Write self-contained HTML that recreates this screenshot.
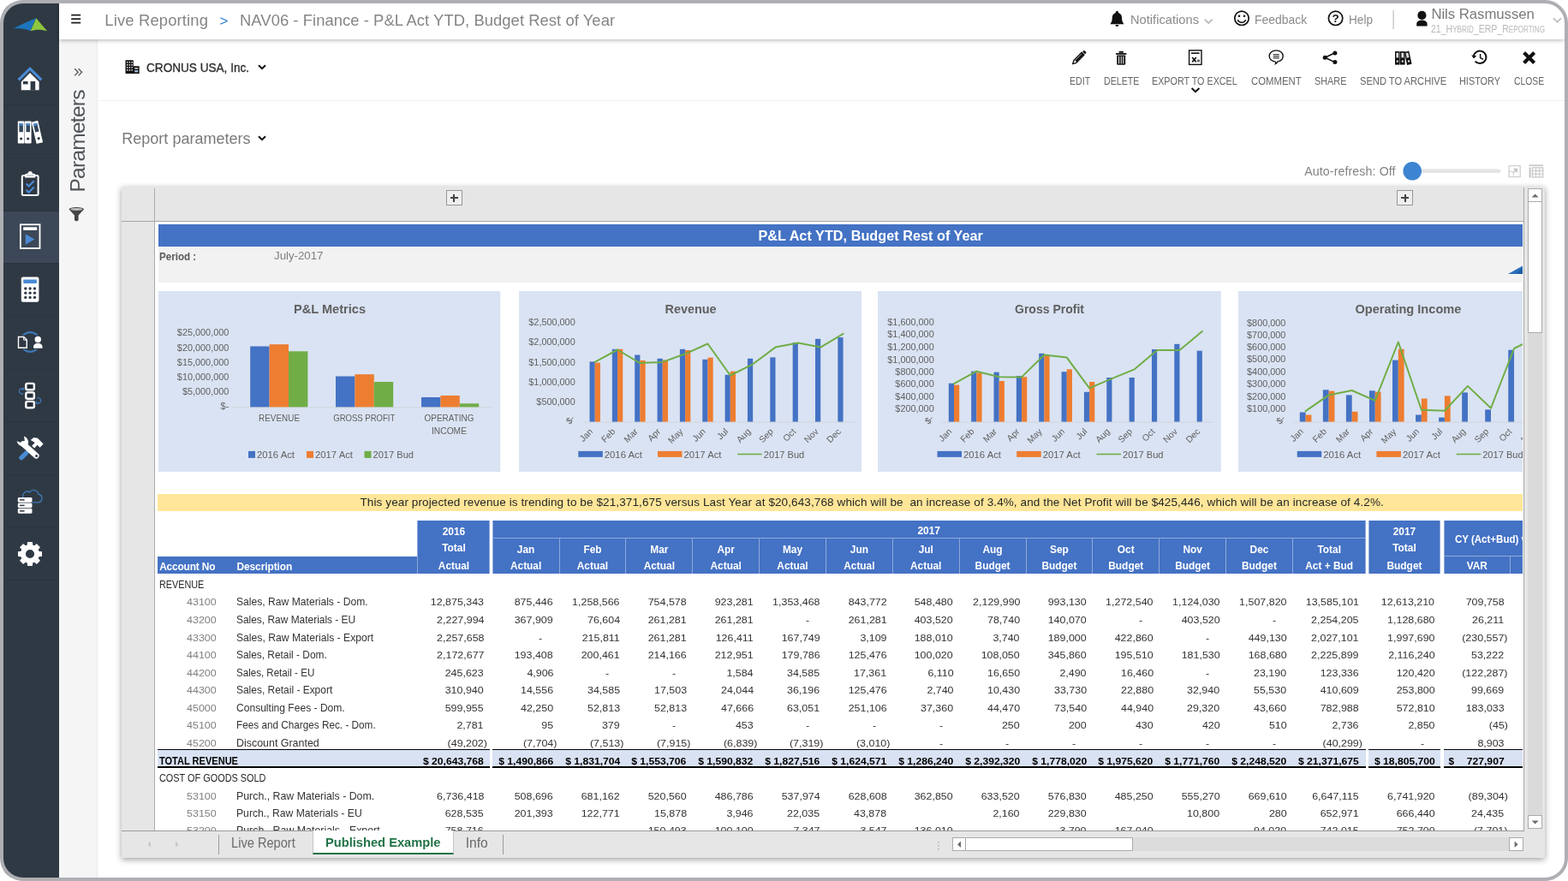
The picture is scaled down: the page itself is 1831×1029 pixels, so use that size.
<!DOCTYPE html>
<html lang="en"><head><meta charset="utf-8"><title>NAV06 - Finance - P&amp;L Act YTD, Budget Rest of Year</title>
<style>
*{box-sizing:border-box;margin:0;padding:0}
html,body{width:1831px;height:1029px;overflow:hidden;background:#fff}
body{font-family:"Liberation Sans",sans-serif;color:#333;position:relative}
.a{position:absolute;display:block}
.t{position:absolute;white-space:nowrap}
#app{position:absolute;left:0;top:0;width:1831px;height:1029px;overflow:hidden;background:#fff;will-change:transform}
#view{position:absolute;left:181px;top:259px;width:1597.4px;height:710.8px;background:#fff;overflow:hidden}
#bezel{position:absolute;left:0;top:0;width:1831px;height:1029px;border:4px solid #aeafb3;border-radius:27px;box-shadow:0 0 0 40px #fff;z-index:50;pointer-events:none}
</style></head>
<body>
<div id="app">
<div class="a" style="left:69px;top:46px;width:45px;height:979px;background:#f5f5f6;border-right:1px solid #e9e9e9;"></div>
<svg class="a" style="left:69px;top:46px;" width="46" height="260" viewBox="69 46 46 260"><path d="M87.2 80.2 l4 4.1 l-4 4.1 M91.6 80.2 l4 4.1 l-4 4.1" fill="none" stroke="#555" stroke-width="1.3"/><path d="M80.6 244.6 a8.7 2.7 0 0 1 17.4 0 l-6.4 7 v5.6 l-1.6 1 h-1.4 l-1.6 -1 v-5.6 Z" fill="#444"/><ellipse cx="89.3" cy="244.4" rx="7" ry="1.5" fill="#bdbdbd"/></svg>
<div class="t" style="left:90px;top:164px;width:0;height:0;"><div class="t" style="left:-60px;top:-14.5px;width:120px;font-size:24.6px;line-height:29px;color:#50555a;letter-spacing:-0.79px;transform:rotate(-90deg);transform-origin:50% 50%;">Parameters</div></div>
<div class="a" style="left:115px;top:117px;width:1712px;height:1px;background:#f0f0f0;"></div>
<svg class="a" style="left:115px;top:46px;" width="1712" height="170" viewBox="115 46 1712 170"><path d="M146.5 70.2 h9.2 v15.8 h-9.2 Z M155.7 77.2 h7 v8.8 h-7 Z" fill="#111"/><rect x="148" y="72" width="1.4" height="1.6" fill="#e8e8e8"/><rect x="150.7" y="72" width="1.4" height="1.6" fill="#e8e8e8"/><rect x="153.4" y="72" width="1.4" height="1.6" fill="#e8e8e8"/><rect x="148" y="75" width="1.4" height="1.6" fill="#e8e8e8"/><rect x="150.7" y="75" width="1.4" height="1.6" fill="#e8e8e8"/><rect x="153.4" y="75" width="1.4" height="1.6" fill="#e8e8e8"/><rect x="148" y="78" width="1.4" height="1.6" fill="#e8e8e8"/><rect x="150.7" y="78" width="1.4" height="1.6" fill="#e8e8e8"/><rect x="153.4" y="78" width="1.4" height="1.6" fill="#e8e8e8"/><rect x="148" y="81" width="1.4" height="1.6" fill="#e8e8e8"/><rect x="150.7" y="81" width="1.4" height="1.6" fill="#e8e8e8"/><rect x="153.4" y="81" width="1.4" height="1.6" fill="#e8e8e8"/><rect x="157.2" y="79.2" width="4" height="1.4" fill="#e8e8e8"/><rect x="157.2" y="82" width="4" height="2.4" fill="#9db7d6"/><path d="M302 76.2 l4 4 l4 -4" fill="none" stroke="#111" stroke-width="2"/><path d="M302 159.2 l4 4 l4 -4" fill="none" stroke="#111" stroke-width="2"/><g transform="translate(1260.2 67.2) scale(0.9) translate(-1260.4 -66.6)"><path d="M1252 74.9 l1.5 -4.7 l10.2 -10.2 l3.2 3.2 l-10.2 10.2 Z" fill="none" stroke="#111" stroke-width="1.5" stroke-linejoin="round"/><path d="M1255 70.5 l9.6 -9.6 l2 2 l-9.6 9.6 Z M1264.7 59 l1.2 -1.2 a1.2 1.2 0 0 1 1.7 0 l1.6 1.6 a1.2 1.2 0 0 1 0 1.7 l-1.2 1.2 Z" fill="#111"/></g><path d="M1303 62 h12.4 v1.8 h-12.4 Z M1306.6 59.8 h5.2 v2 h-5.2 Z" fill="#111"/><path d="M1304.2 64.6 h10 v10 a1.2 1.2 0 0 1 -1.2 1.2 h-7.6 a1.2 1.2 0 0 1 -1.2 -1.2 Z" fill="#111"/><rect x="1306.1" y="65.8" width="1" height="8.6" fill="#fff"/><rect x="1308.7" y="65.8" width="1" height="8.6" fill="#fff"/><rect x="1311.3" y="65.8" width="1" height="8.6" fill="#fff"/><rect x="1388.6" y="58.8" width="14.4" height="16.6" fill="none" stroke="#111" stroke-width="1.4"/><rect x="1391" y="61.3" width="9.6" height="1.6" fill="#111"/><path d="M1392.2 67 l4.6 5.4 M1396.8 67 l-4.6 5.4" stroke="#111" stroke-width="1.7" fill="none"/><rect x="1398" y="69.6" width="3" height="2.8" fill="#666"/><path d="M1490.2 58.9 c4.6 0 8 2.8 8 6.6 c0 3.2 -2.6 5.8 -6.2 6.4 c-0.4 1.4 -1.2 2.4 -2.6 2.8 c0.4 -0.8 0.4 -1.8 0 -2.6 c-4.2 -0.2 -7.2 -3 -7.2 -6.6 c0 -3.800 3.4 -6.6 8 -6.6 Z" fill="none" stroke="#111" stroke-width="1.4"/><rect x="1486.6" y="63.2" width="7.2" height="1" fill="#111"/><rect x="1486.6" y="65.3" width="7.2" height="1" fill="#111"/><rect x="1486.6" y="67.4" width="7.2" height="1" fill="#111"/><path d="M1547.2 67.2 L1558.8 61.8 M1547.2 67.2 L1558.8 72.6" stroke="#111" stroke-width="1.5" fill="none"/><circle cx="1547.2" cy="67.2" r="2.5" fill="#111"/><circle cx="1558.9" cy="61.9" r="2.5" fill="#111"/><circle cx="1558.9" cy="72.5" r="2.5" fill="#111"/><rect x="1629" y="60" width="5.6" height="15.6" fill="#111"/><rect x="1630.4" y="61.6" width="2.8" height="5.8" fill="#ddd"/><rect x="1630.8" y="70.6" width="2" height="2" fill="#fff"/><rect x="1635" y="60" width="5.6" height="15.6" fill="#111"/><rect x="1636.4" y="61.6" width="2.8" height="5.8" fill="#ddd"/><rect x="1636.8" y="70.6" width="2" height="2" fill="#fff"/><g transform="rotate(-12 1644 67.8)"><rect x="1641.4" y="60" width="5.6" height="15.6" fill="#111"/><rect x="1642.8" y="61.6" width="2.8" height="5.8" fill="#ddd"/><rect x="1643.2" y="70.6" width="2" height="2" fill="#fff"/></g><path d="M1722.6 71.6 a7.3 7.3 0 1 0 -1.8 -5.2" fill="none" stroke="#111" stroke-width="2"/><path d="M1718.2 64.6 l2.8 3.8 l3.2 -3.4 Z" fill="#111"/><path d="M1728.6 63 v4.6 l3.4 1.6" fill="none" stroke="#111" stroke-width="1.5"/><path d="M1779.6 61.4 L1791.6 73.4 M1791.6 61.4 L1779.6 73.4" stroke="#111" stroke-width="4.2" fill="none"/><path d="M1391.6 103 l4.4 4.2 l4.4 -4.2" fill="none" stroke="#111" stroke-width="2"/><rect x="1658" y="197.6" width="94.5" height="4.4" rx="2.2" fill="#e4e4e4"/><circle cx="1649.2" cy="199.8" r="10.8" fill="#3d85d2"/><rect x="1762.2" y="193.6" width="13" height="13" fill="none" stroke="#d0d0d0" stroke-width="1.3"/><path d="M1765 204 l6 -6 M1767.5 197.6 h3.8 v3.8" fill="none" stroke="#c4c4c4" stroke-width="1.6"/><rect x="1762.2" y="200.5" width="5" height="6" fill="#fff" stroke="#d0d0d0" stroke-width="1"/><rect x="1785.6" y="192.4" width="16.4" height="1.6" fill="#c6c6c6"/><rect x="1785.6" y="195.4" width="2" height="12" fill="#c6c6c6"/><rect x="1789.4" y="195.8" width="12.4" height="11.2" fill="none" stroke="#c6c6c6" stroke-width="1.2"/><path d="M1793.5 195.8 v11.2 M1797.6 195.8 v11.2 M1789.4 199.5 h12.4 M1789.4 203.2 h12.4" stroke="#c6c6c6" stroke-width="1" fill="none"/></svg>
<div class="t" style="left:171.2px;top:71px;font-size:14.6px;line-height:16px;color:#2e2e2e;transform:scaleX(0.9311);transform-origin:0 50%;-webkit-text-stroke:0.35px #2e2e2e;">CRONUS USA, Inc.</div>
<div class="t" style="left:142.3px;top:152px;font-size:18px;line-height:20px;color:#7a7a7a;letter-spacing:0.01px;">Report parameters</div>
<div class="t" style="left:1523.2px;top:192px;font-size:14.2px;line-height:16px;color:#838383;letter-spacing:0.11px;">Auto-refresh: Off</div>
<div class="t" style="left:1248.6px;top:88px;font-size:12.3px;line-height:14px;color:#666;transform:scaleX(0.8637);transform-origin:0 50%;">EDIT</div>
<div class="t" style="left:1288.8px;top:88px;font-size:12.3px;line-height:14px;color:#666;transform:scaleX(0.8652);transform-origin:0 50%;">DELETE</div>
<div class="t" style="left:1345.4px;top:88px;font-size:12.3px;line-height:14px;color:#666;transform:scaleX(0.8759);transform-origin:0 50%;">EXPORT TO EXCEL</div>
<div class="t" style="left:1461px;top:88px;font-size:12.3px;line-height:14px;color:#666;transform:scaleX(0.9253);transform-origin:0 50%;">COMMENT</div>
<div class="t" style="left:1535.4px;top:88px;font-size:12.3px;line-height:14px;color:#666;transform:scaleX(0.8825);transform-origin:0 50%;">SHARE</div>
<div class="t" style="left:1587.8px;top:88px;font-size:12.3px;line-height:14px;color:#666;transform:scaleX(0.9064);transform-origin:0 50%;">SEND TO ARCHIVE</div>
<div class="t" style="left:1704px;top:88px;font-size:12.3px;line-height:14px;color:#666;transform:scaleX(0.8851);transform-origin:0 50%;">HISTORY</div>
<div class="t" style="left:1767.8px;top:88px;font-size:12.3px;line-height:14px;color:#666;transform:scaleX(0.8441);transform-origin:0 50%;">CLOSE</div>
<div class="a" style="left:141.5px;top:218.3px;width:1662.8px;height:784px;background:#e6e6e6;box-shadow:0 2px 7px rgba(0,0,0,.38);"></div>
<div class="a" style="left:180px;top:219.5px;width:1px;height:750.5px;background:#ababab;"></div>
<div class="a" style="left:141.5px;top:258px;width:1638px;height:1px;background:#a6a6a6;"></div>
<div class="a" style="left:1778.4px;top:259px;width:1px;height:711px;background:#fff;"></div>
<div class="a" style="left:1779.4px;top:219px;width:1.1px;height:751px;background:#a8a8a8;"></div>
<div class="a" style="left:141.5px;top:969.8px;width:1638.5px;height:1px;background:#9b9b9b;"></div>
<div class="a" style="left:521px;top:222.2px;width:18.7px;height:18.2px;background:#efefef;border:1px solid #979797;"></div>
<div class="a" style="left:525.7px;top:230.3px;width:9.2px;height:2px;background:#454545;"></div>
<div class="a" style="left:529.3px;top:226.7px;width:2px;height:9.2px;background:#454545;"></div>
<div class="a" style="left:1631.2px;top:222.2px;width:18.7px;height:18.2px;background:#efefef;border:1px solid #979797;"></div>
<div class="a" style="left:1635.9px;top:230.3px;width:9.2px;height:2px;background:#454545;"></div>
<div class="a" style="left:1639.5px;top:226.7px;width:2px;height:9.2px;background:#454545;"></div>
<div class="a" style="left:1784.3px;top:220px;width:16.4px;height:748.3px;background:#dadada;"></div>
<div class="a" style="left:1784.3px;top:220.2px;width:16.4px;height:16.2px;background:#fff;border:1px solid #ababab;"></div>
<div class="a" style="left:1784.3px;top:236.4px;width:16.4px;height:152.4px;background:#fff;border:1px solid #ababab;border-top:0;"></div>
<div class="a" style="left:1784.3px;top:952.4px;width:16.4px;height:15.9px;background:#fff;border:1px solid #ababab;"></div>
<div class="a" style="left:1112px;top:978.4px;width:666.6px;height:15.6px;background:#dcdcdc;"></div>
<div class="a" style="left:1112px;top:978.4px;width:16px;height:15.6px;background:#fff;border:1px solid #ababab;"></div>
<div class="a" style="left:1128px;top:978.4px;width:195.2px;height:15.6px;background:#fff;border:1px solid #ababab;border-left:0;"></div>
<div class="a" style="left:1762.2px;top:978.4px;width:16.4px;height:15.6px;background:#fff;border:1px solid #ababab;"></div>
<svg class="a" style="left:141px;top:218px;" width="1665" height="785" viewBox="141 218 1665 785"><path d="M1788.6 230.6 l4 -4 l4 4 Z" fill="#6c6c6c"/><path d="M1788.6 958.4 l4 4 l4 -4 Z" fill="#6c6c6c"/><path d="M1122 982.4 l-4 3.8 l4 3.8 Z" fill="#6c6c6c"/><path d="M1768.6 982.4 l4 3.800 l-4 3.800 Z" fill="#6c6c6c"/><rect x="1095" y="983" width="1.4" height="1.4" fill="#aaa"/><rect x="1095" y="987" width="1.4" height="1.4" fill="#aaa"/><rect x="1095" y="991" width="1.4" height="1.4" fill="#aaa"/><path d="M176 982.6 l-3.600 3.600 l3.600 3.600 Z" fill="#c9c9c9"/><path d="M205 982.6 l3.600 3.600 l-3.600 3.600 Z" fill="#c9c9c9"/></svg>
<div class="a" style="left:255.2px;top:975.2px;width:1px;height:22.4px;background:#9d9d9d;"></div>
<div class="a" style="left:587.4px;top:975.2px;width:1px;height:22.4px;background:#9d9d9d;"></div>
<div class="a" style="left:365.4px;top:970px;width:164.2px;height:28px;background:#fff;border-bottom:2px solid #217346;border-left:1px solid #c6c6c6;border-right:1px solid #c6c6c6;"></div>
<div class="t" style="left:270.2px;top:976px;font-size:15.6px;line-height:17px;color:#6a6a6a;transform:scaleX(0.9376);transform-origin:0 50%;">Live Report</div>
<div class="t" style="left:380.4px;top:975px;font-size:15.2px;line-height:17px;color:#217346;font-weight:700;transform:scaleX(0.9657);transform-origin:0 50%;">Published Example</div>
<div class="t" style="left:543.8px;top:976px;font-size:15.6px;line-height:17px;color:#6a6a6a;letter-spacing:-0.07px;">Info</div>
<div id="view">
<div class="a" style="left:3.5px;top:2.5px;width:1594.5px;height:26px;background:#4472c4;"></div>
<div class="t" style="left:704.5px;top:7px;font-size:16.2px;line-height:18px;color:#fff;font-weight:700;letter-spacing:0.04px;">P&amp;L Act YTD, Budget Rest of Year</div>
<div class="a" style="left:3.5px;top:28.5px;width:1594.5px;height:42.2px;background:#f2f2f2;"></div>
<div class="t" style="left:5.3px;top:34px;font-size:12px;line-height:14px;color:#595959;font-weight:700;transform:scaleX(0.9670);transform-origin:0 50%;">Period :</div>
<div class="t" style="left:139px;top:33px;font-size:12.6px;line-height:14px;color:#7f7f7f;transform:scaleX(1.0524);transform-origin:0 50%;">July-2017</div>
<svg class="a" style="left:1578px;top:47px;" width="22" height="16" viewBox="0 0 22 16"><path d="M2 14 L20 4 L20 14 Z" fill="#2a6ebb"/><path d="M12 13.5 L20 6 L20 14 Z" fill="#1d5aa0"/></svg>
<div class="a" style="left:3px;top:318px;width:1595px;height:20px;background:#ffe699;"></div>
<div class="t" style="left:239.5px;top:320px;font-size:13.5px;line-height:15px;color:#262626;letter-spacing:0.11px;white-space:pre;">This year projected revenue is trending to be $21,371,675 versus Last Year at $20,643,768 which will be  an increase of 3.4%, and the Net Profit will be $425,446, which will be an increase of 4.2%.</div>
<div class="a" style="left:2.7px;top:390.7px;width:303.3px;height:20.6px;background:#4472c4;"></div>
<div class="t" style="left:5.2px;top:396px;font-size:11.9px;line-height:14px;color:#fff;font-weight:700;letter-spacing:-0.16px;">Account No</div>
<div class="t" style="left:95.5px;top:396px;font-size:11.9px;line-height:14px;color:#fff;font-weight:700;letter-spacing:-0.07px;">Description</div>
<div class="a" style="left:306px;top:349.2px;width:85.2px;height:62.1px;background:#4472c4;border-left:1px solid #8ea9db;border-right:1px solid #8ea9db;"></div>
<div class="t" style="left:335.76px;top:355px;font-size:11.9px;line-height:14px;color:#fff;font-weight:700;">2016</div>
<div class="t" style="left:335.23px;top:374px;font-size:11.9px;line-height:14px;color:#fff;font-weight:700;">Total</div>
<div class="t" style="left:330.82px;top:395px;font-size:11.9px;line-height:14px;color:#fff;font-weight:700;">Actual</div>
<div class="a" style="left:394.2px;top:349.2px;width:1019.8px;height:62.1px;background:#4472c4;border-left:1px solid #8ea9db;border-right:1px solid #8ea9db;"></div>
<div class="a" style="left:394.2px;top:369px;width:1019.8px;height:1px;background:#8ea9db;"></div>
<div class="t" style="left:890.46px;top:354px;font-size:11.9px;line-height:14px;color:#fff;font-weight:700;">2017</div>
<div class="t" style="left:422.87px;top:376px;font-size:11.9px;line-height:14px;color:#fff;font-weight:700;">Jan</div>
<div class="t" style="left:414.94px;top:395px;font-size:11.9px;line-height:14px;color:#fff;font-weight:700;">Actual</div>
<div class="a" style="left:471.55px;top:370px;width:1px;height:41.3px;background:#8ea9db;"></div>
<div class="t" style="left:500.4px;top:376px;font-size:11.9px;line-height:14px;color:#fff;font-weight:700;">Feb</div>
<div class="t" style="left:492.79px;top:395px;font-size:11.9px;line-height:14px;color:#fff;font-weight:700;">Actual</div>
<div class="a" style="left:549.4px;top:370px;width:1px;height:41.3px;background:#8ea9db;"></div>
<div class="t" style="left:578.24px;top:376px;font-size:11.9px;line-height:14px;color:#fff;font-weight:700;">Mar</div>
<div class="t" style="left:570.64px;top:395px;font-size:11.9px;line-height:14px;color:#fff;font-weight:700;">Actual</div>
<div class="a" style="left:627.25px;top:370px;width:1px;height:41.3px;background:#8ea9db;"></div>
<div class="t" style="left:656.43px;top:376px;font-size:11.9px;line-height:14px;color:#fff;font-weight:700;">Apr</div>
<div class="t" style="left:648.49px;top:395px;font-size:11.9px;line-height:14px;color:#fff;font-weight:700;">Actual</div>
<div class="a" style="left:705.1px;top:370px;width:1px;height:41.3px;background:#8ea9db;"></div>
<div class="t" style="left:732.95px;top:376px;font-size:11.9px;line-height:14px;color:#fff;font-weight:700;">May</div>
<div class="t" style="left:726.34px;top:395px;font-size:11.9px;line-height:14px;color:#fff;font-weight:700;">Actual</div>
<div class="a" style="left:782.95px;top:370px;width:1px;height:41.3px;background:#8ea9db;"></div>
<div class="t" style="left:811.8px;top:376px;font-size:11.9px;line-height:14px;color:#fff;font-weight:700;">Jun</div>
<div class="t" style="left:804.19px;top:395px;font-size:11.9px;line-height:14px;color:#fff;font-weight:700;">Actual</div>
<div class="a" style="left:860.8px;top:370px;width:1px;height:41.3px;background:#8ea9db;"></div>
<div class="t" style="left:891.63px;top:376px;font-size:11.9px;line-height:14px;color:#fff;font-weight:700;">Jul</div>
<div class="t" style="left:882.04px;top:395px;font-size:11.9px;line-height:14px;color:#fff;font-weight:700;">Actual</div>
<div class="a" style="left:938.65px;top:370px;width:1px;height:41.3px;background:#8ea9db;"></div>
<div class="t" style="left:966.51px;top:376px;font-size:11.9px;line-height:14px;color:#fff;font-weight:700;">Aug</div>
<div class="t" style="left:957.58px;top:395px;font-size:11.9px;line-height:14px;color:#fff;font-weight:700;">Budget</div>
<div class="a" style="left:1016.5px;top:370px;width:1px;height:41.3px;background:#8ea9db;"></div>
<div class="t" style="left:1045.01px;top:376px;font-size:11.9px;line-height:14px;color:#fff;font-weight:700;">Sep</div>
<div class="t" style="left:1035.43px;top:395px;font-size:11.9px;line-height:14px;color:#fff;font-weight:700;">Budget</div>
<div class="a" style="left:1094.35px;top:370px;width:1px;height:41.3px;background:#8ea9db;"></div>
<div class="t" style="left:1123.86px;top:376px;font-size:11.9px;line-height:14px;color:#fff;font-weight:700;">Oct</div>
<div class="t" style="left:1113.28px;top:395px;font-size:11.9px;line-height:14px;color:#fff;font-weight:700;">Budget</div>
<div class="a" style="left:1172.2px;top:370px;width:1px;height:41.3px;background:#8ea9db;"></div>
<div class="t" style="left:1200.38px;top:376px;font-size:11.9px;line-height:14px;color:#fff;font-weight:700;">Nov</div>
<div class="t" style="left:1191.13px;top:395px;font-size:11.9px;line-height:14px;color:#fff;font-weight:700;">Budget</div>
<div class="a" style="left:1250.05px;top:370px;width:1px;height:41.3px;background:#8ea9db;"></div>
<div class="t" style="left:1278.56px;top:376px;font-size:11.9px;line-height:14px;color:#fff;font-weight:700;">Dec</div>
<div class="t" style="left:1268.98px;top:395px;font-size:11.9px;line-height:14px;color:#fff;font-weight:700;">Budget</div>
<div class="a" style="left:1327.9px;top:370px;width:1px;height:41.3px;background:#8ea9db;"></div>
<div class="t" style="left:1357.43px;top:376px;font-size:11.9px;line-height:14px;color:#fff;font-weight:700;">Total</div>
<div class="t" style="left:1343.27px;top:395px;font-size:11.9px;line-height:14px;color:#fff;font-weight:700;">Act + Bud</div>
<div class="a" style="left:1417px;top:349.2px;width:84.3px;height:62.1px;background:#4472c4;border-left:1px solid #8ea9db;border-right:1px solid #8ea9db;"></div>
<div class="t" style="left:1445.76px;top:355px;font-size:11.9px;line-height:14px;color:#fff;font-weight:700;">2017</div>
<div class="t" style="left:1445.23px;top:374px;font-size:11.9px;line-height:14px;color:#fff;font-weight:700;">Total</div>
<div class="t" style="left:1438.51px;top:395px;font-size:11.9px;line-height:14px;color:#fff;font-weight:700;">Budget</div>
<div class="a" style="left:1505px;top:349.2px;width:114px;height:62.1px;background:#4472c4;border-left:1px solid #8ea9db;"></div>
<div class="a" style="left:1505px;top:390px;width:114px;height:1px;background:#8ea9db;"></div>
<div class="a" style="left:1582.3px;top:391px;width:1px;height:20.3px;background:#8ea9db;"></div>
<div class="t" style="left:1517.5px;top:364px;font-size:11.9px;line-height:14px;color:#fff;font-weight:700;transform:scaleX(0.9680);transform-origin:0 50%;">CY (Act+Bud) vs. Budget</div>
<div class="t" style="left:1531.68px;top:395px;font-size:11.9px;line-height:14px;color:#fff;font-weight:700;">VAR</div>
<div class="t" style="left:1599.94px;top:395px;font-size:11.9px;line-height:14px;color:#fff;font-weight:700;">VAR %</div>
<div class="t" style="left:5px;top:417px;font-size:12.3px;line-height:14px;color:#262626;transform:scaleX(0.8795);transform-origin:0 50%;">REVENUE</div>
<div class="t" style="left:36.6px;top:437px;font-size:11.8px;line-height:14px;color:#808080;transform:scaleX(1.0575);transform-origin:0 50%;">43100</div>
<div class="t" style="left:95.2px;top:437px;font-size:11.9px;line-height:14px;color:#333;transform:scaleX(1.0201);transform-origin:0 50%;">Sales, Raw Materials - Dom.</div>
<div class="t" style="left:324.94px;top:437px;font-size:11.8px;line-height:14px;color:#333;transform:scaleX(1.0550);transform-origin:100% 50%;">12,875,343</div>
<div class="t" style="left:422.39px;top:437px;font-size:11.8px;line-height:14px;color:#333;transform:scaleX(1.0550);transform-origin:100% 50%;">875,446</div>
<div class="t" style="left:490.4px;top:437px;font-size:11.8px;line-height:14px;color:#333;transform:scaleX(1.0550);transform-origin:100% 50%;">1,258,566</div>
<div class="t" style="left:578.09px;top:437px;font-size:11.8px;line-height:14px;color:#333;transform:scaleX(1.0550);transform-origin:100% 50%;">754,578</div>
<div class="t" style="left:655.94px;top:437px;font-size:11.8px;line-height:14px;color:#333;transform:scaleX(1.0550);transform-origin:100% 50%;">923,281</div>
<div class="t" style="left:723.95px;top:437px;font-size:11.8px;line-height:14px;color:#333;transform:scaleX(1.0550);transform-origin:100% 50%;">1,353,468</div>
<div class="t" style="left:811.64px;top:437px;font-size:11.8px;line-height:14px;color:#333;transform:scaleX(1.0550);transform-origin:100% 50%;">843,772</div>
<div class="t" style="left:889.49px;top:437px;font-size:11.8px;line-height:14px;color:#333;transform:scaleX(1.0550);transform-origin:100% 50%;">548,480</div>
<div class="t" style="left:957.5px;top:437px;font-size:11.8px;line-height:14px;color:#333;transform:scaleX(1.0550);transform-origin:100% 50%;">2,129,990</div>
<div class="t" style="left:1045.19px;top:437px;font-size:11.8px;line-height:14px;color:#333;transform:scaleX(1.0550);transform-origin:100% 50%;">993,130</div>
<div class="t" style="left:1113.2px;top:437px;font-size:11.8px;line-height:14px;color:#333;transform:scaleX(1.0550);transform-origin:100% 50%;">1,272,540</div>
<div class="t" style="left:1191.05px;top:437px;font-size:11.8px;line-height:14px;color:#333;transform:scaleX(1.0550);transform-origin:100% 50%;">1,124,030</div>
<div class="t" style="left:1268.9px;top:437px;font-size:11.8px;line-height:14px;color:#333;transform:scaleX(1.0550);transform-origin:100% 50%;">1,507,820</div>
<div class="t" style="left:1346.54px;top:437px;font-size:11.8px;line-height:14px;color:#333;transform:scaleX(1.0550);transform-origin:100% 50%;">13,585,101</div>
<div class="t" style="left:1435.44px;top:437px;font-size:11.8px;line-height:14px;color:#333;transform:scaleX(1.0550);transform-origin:100% 50%;">12,613,210</div>
<div class="t" style="left:1532.54px;top:437px;font-size:11.8px;line-height:14px;color:#333;transform:scaleX(1.0550);transform-origin:100% 50%;">709,758</div>
<div class="t" style="left:36.6px;top:458px;font-size:11.8px;line-height:14px;color:#808080;transform:scaleX(1.0575);transform-origin:0 50%;">43200</div>
<div class="t" style="left:95.2px;top:458px;font-size:11.9px;line-height:14px;color:#333;transform:scaleX(1.0031);transform-origin:0 50%;">Sales, Raw Materials - EU</div>
<div class="t" style="left:331.5px;top:458px;font-size:11.8px;line-height:14px;color:#333;transform:scaleX(1.0550);transform-origin:100% 50%;">2,227,994</div>
<div class="t" style="left:422.39px;top:458px;font-size:11.8px;line-height:14px;color:#333;transform:scaleX(1.0550);transform-origin:100% 50%;">367,909</div>
<div class="t" style="left:506.81px;top:458px;font-size:11.8px;line-height:14px;color:#333;transform:scaleX(1.0550);transform-origin:100% 50%;">76,604</div>
<div class="t" style="left:578.09px;top:458px;font-size:11.8px;line-height:14px;color:#333;transform:scaleX(1.0550);transform-origin:100% 50%;">261,281</div>
<div class="t" style="left:655.94px;top:458px;font-size:11.8px;line-height:14px;color:#333;transform:scaleX(1.0550);transform-origin:100% 50%;">261,281</div>
<div class="t" style="left:759.89px;top:458px;font-size:11.8px;line-height:14px;color:#333;transform:scaleX(1.0550);transform-origin:50% 50%;">-</div>
<div class="t" style="left:811.64px;top:458px;font-size:11.8px;line-height:14px;color:#333;transform:scaleX(1.0550);transform-origin:100% 50%;">261,281</div>
<div class="t" style="left:889.49px;top:458px;font-size:11.8px;line-height:14px;color:#333;transform:scaleX(1.0550);transform-origin:100% 50%;">403,520</div>
<div class="t" style="left:973.91px;top:458px;font-size:11.8px;line-height:14px;color:#333;transform:scaleX(1.0550);transform-origin:100% 50%;">78,740</div>
<div class="t" style="left:1045.19px;top:458px;font-size:11.8px;line-height:14px;color:#333;transform:scaleX(1.0550);transform-origin:100% 50%;">140,070</div>
<div class="t" style="left:1149.14px;top:458px;font-size:11.8px;line-height:14px;color:#333;transform:scaleX(1.0550);transform-origin:50% 50%;">-</div>
<div class="t" style="left:1200.89px;top:458px;font-size:11.8px;line-height:14px;color:#333;transform:scaleX(1.0550);transform-origin:100% 50%;">403,520</div>
<div class="t" style="left:1304.84px;top:458px;font-size:11.8px;line-height:14px;color:#333;transform:scaleX(1.0550);transform-origin:50% 50%;">-</div>
<div class="t" style="left:1353.1px;top:458px;font-size:11.8px;line-height:14px;color:#333;transform:scaleX(1.0550);transform-origin:100% 50%;">2,254,205</div>
<div class="t" style="left:1442px;top:458px;font-size:11.8px;line-height:14px;color:#333;transform:scaleX(1.0550);transform-origin:100% 50%;">1,128,680</div>
<div class="t" style="left:1539.98px;top:458px;font-size:11.8px;line-height:14px;color:#333;transform:scaleX(1.0550);transform-origin:100% 50%;">26,211</div>
<div class="t" style="left:36.6px;top:479px;font-size:11.8px;line-height:14px;color:#808080;transform:scaleX(1.0575);transform-origin:0 50%;">43300</div>
<div class="t" style="left:95.2px;top:479px;font-size:11.9px;line-height:14px;color:#333;transform:scaleX(1.0227);transform-origin:0 50%;">Sales, Raw Materials - Export</div>
<div class="t" style="left:331.5px;top:479px;font-size:11.8px;line-height:14px;color:#333;transform:scaleX(1.0550);transform-origin:100% 50%;">2,257,658</div>
<div class="t" style="left:448.49px;top:479px;font-size:11.8px;line-height:14px;color:#333;transform:scaleX(1.0550);transform-origin:50% 50%;">-</div>
<div class="t" style="left:501.12px;top:479px;font-size:11.8px;line-height:14px;color:#333;transform:scaleX(1.0550);transform-origin:100% 50%;">215,811</div>
<div class="t" style="left:578.09px;top:479px;font-size:11.8px;line-height:14px;color:#333;transform:scaleX(1.0550);transform-origin:100% 50%;">261,281</div>
<div class="t" style="left:656.82px;top:479px;font-size:11.8px;line-height:14px;color:#333;transform:scaleX(1.0550);transform-origin:100% 50%;">126,411</div>
<div class="t" style="left:733.79px;top:479px;font-size:11.8px;line-height:14px;color:#333;transform:scaleX(1.0550);transform-origin:100% 50%;">167,749</div>
<div class="t" style="left:824.77px;top:479px;font-size:11.8px;line-height:14px;color:#333;transform:scaleX(1.0550);transform-origin:100% 50%;">3,109</div>
<div class="t" style="left:889.49px;top:479px;font-size:11.8px;line-height:14px;color:#333;transform:scaleX(1.0550);transform-origin:100% 50%;">188,010</div>
<div class="t" style="left:980.47px;top:479px;font-size:11.8px;line-height:14px;color:#333;transform:scaleX(1.0550);transform-origin:100% 50%;">3,740</div>
<div class="t" style="left:1045.19px;top:479px;font-size:11.8px;line-height:14px;color:#333;transform:scaleX(1.0550);transform-origin:100% 50%;">189,000</div>
<div class="t" style="left:1123.04px;top:479px;font-size:11.8px;line-height:14px;color:#333;transform:scaleX(1.0550);transform-origin:100% 50%;">422,860</div>
<div class="t" style="left:1226.99px;top:479px;font-size:11.8px;line-height:14px;color:#333;transform:scaleX(1.0550);transform-origin:50% 50%;">-</div>
<div class="t" style="left:1278.74px;top:479px;font-size:11.8px;line-height:14px;color:#333;transform:scaleX(1.0550);transform-origin:100% 50%;">449,130</div>
<div class="t" style="left:1353.1px;top:479px;font-size:11.8px;line-height:14px;color:#333;transform:scaleX(1.0550);transform-origin:100% 50%;">2,027,101</div>
<div class="t" style="left:1442px;top:479px;font-size:11.8px;line-height:14px;color:#333;transform:scaleX(1.0550);transform-origin:100% 50%;">1,997,690</div>
<div class="t" style="left:1529.08px;top:479px;font-size:11.8px;line-height:14px;color:#333;transform:scaleX(1.0550);transform-origin:100% 50%;">(230,557)</div>
<div class="t" style="left:36.6px;top:499px;font-size:11.8px;line-height:14px;color:#808080;transform:scaleX(1.0575);transform-origin:0 50%;">44100</div>
<div class="t" style="left:95.2px;top:499px;font-size:11.9px;line-height:14px;color:#333;transform:scaleX(0.9999);transform-origin:0 50%;">Sales, Retail - Dom.</div>
<div class="t" style="left:331.5px;top:499px;font-size:11.8px;line-height:14px;color:#333;transform:scaleX(1.0550);transform-origin:100% 50%;">2,172,677</div>
<div class="t" style="left:422.39px;top:499px;font-size:11.8px;line-height:14px;color:#333;transform:scaleX(1.0550);transform-origin:100% 50%;">193,408</div>
<div class="t" style="left:500.24px;top:499px;font-size:11.8px;line-height:14px;color:#333;transform:scaleX(1.0550);transform-origin:100% 50%;">200,461</div>
<div class="t" style="left:578.09px;top:499px;font-size:11.8px;line-height:14px;color:#333;transform:scaleX(1.0550);transform-origin:100% 50%;">214,166</div>
<div class="t" style="left:655.94px;top:499px;font-size:11.8px;line-height:14px;color:#333;transform:scaleX(1.0550);transform-origin:100% 50%;">212,951</div>
<div class="t" style="left:733.79px;top:499px;font-size:11.8px;line-height:14px;color:#333;transform:scaleX(1.0550);transform-origin:100% 50%;">179,786</div>
<div class="t" style="left:811.64px;top:499px;font-size:11.8px;line-height:14px;color:#333;transform:scaleX(1.0550);transform-origin:100% 50%;">125,476</div>
<div class="t" style="left:889.49px;top:499px;font-size:11.8px;line-height:14px;color:#333;transform:scaleX(1.0550);transform-origin:100% 50%;">100,020</div>
<div class="t" style="left:967.34px;top:499px;font-size:11.8px;line-height:14px;color:#333;transform:scaleX(1.0550);transform-origin:100% 50%;">108,050</div>
<div class="t" style="left:1045.19px;top:499px;font-size:11.8px;line-height:14px;color:#333;transform:scaleX(1.0550);transform-origin:100% 50%;">345,860</div>
<div class="t" style="left:1123.04px;top:499px;font-size:11.8px;line-height:14px;color:#333;transform:scaleX(1.0550);transform-origin:100% 50%;">195,510</div>
<div class="t" style="left:1200.89px;top:499px;font-size:11.8px;line-height:14px;color:#333;transform:scaleX(1.0550);transform-origin:100% 50%;">181,530</div>
<div class="t" style="left:1278.74px;top:499px;font-size:11.8px;line-height:14px;color:#333;transform:scaleX(1.0550);transform-origin:100% 50%;">168,680</div>
<div class="t" style="left:1353.1px;top:499px;font-size:11.8px;line-height:14px;color:#333;transform:scaleX(1.0550);transform-origin:100% 50%;">2,225,899</div>
<div class="t" style="left:1442.88px;top:499px;font-size:11.8px;line-height:14px;color:#333;transform:scaleX(1.0550);transform-origin:100% 50%;">2,116,240</div>
<div class="t" style="left:1539.11px;top:499px;font-size:11.8px;line-height:14px;color:#333;transform:scaleX(1.0550);transform-origin:100% 50%;">53,222</div>
<div class="t" style="left:36.6px;top:520px;font-size:11.8px;line-height:14px;color:#808080;transform:scaleX(1.0575);transform-origin:0 50%;">44200</div>
<div class="t" style="left:95.2px;top:520px;font-size:11.9px;line-height:14px;color:#333;transform:scaleX(0.9722);transform-origin:0 50%;">Sales, Retail - EU</div>
<div class="t" style="left:341.34px;top:520px;font-size:11.8px;line-height:14px;color:#333;transform:scaleX(1.0550);transform-origin:100% 50%;">245,623</div>
<div class="t" style="left:435.52px;top:520px;font-size:11.8px;line-height:14px;color:#333;transform:scaleX(1.0550);transform-origin:100% 50%;">4,906</div>
<div class="t" style="left:526.34px;top:520px;font-size:11.8px;line-height:14px;color:#333;transform:scaleX(1.0550);transform-origin:50% 50%;">-</div>
<div class="t" style="left:604.19px;top:520px;font-size:11.8px;line-height:14px;color:#333;transform:scaleX(1.0550);transform-origin:50% 50%;">-</div>
<div class="t" style="left:669.07px;top:520px;font-size:11.8px;line-height:14px;color:#333;transform:scaleX(1.0550);transform-origin:100% 50%;">1,584</div>
<div class="t" style="left:740.36px;top:520px;font-size:11.8px;line-height:14px;color:#333;transform:scaleX(1.0550);transform-origin:100% 50%;">34,585</div>
<div class="t" style="left:818.21px;top:520px;font-size:11.8px;line-height:14px;color:#333;transform:scaleX(1.0550);transform-origin:100% 50%;">17,361</div>
<div class="t" style="left:903.5px;top:520px;font-size:11.8px;line-height:14px;color:#333;transform:scaleX(1.0550);transform-origin:100% 50%;">6,110</div>
<div class="t" style="left:973.91px;top:520px;font-size:11.8px;line-height:14px;color:#333;transform:scaleX(1.0550);transform-origin:100% 50%;">16,650</div>
<div class="t" style="left:1058.32px;top:520px;font-size:11.8px;line-height:14px;color:#333;transform:scaleX(1.0550);transform-origin:100% 50%;">2,490</div>
<div class="t" style="left:1129.61px;top:520px;font-size:11.8px;line-height:14px;color:#333;transform:scaleX(1.0550);transform-origin:100% 50%;">16,460</div>
<div class="t" style="left:1226.99px;top:520px;font-size:11.8px;line-height:14px;color:#333;transform:scaleX(1.0550);transform-origin:50% 50%;">-</div>
<div class="t" style="left:1285.31px;top:520px;font-size:11.8px;line-height:14px;color:#333;transform:scaleX(1.0550);transform-origin:100% 50%;">23,190</div>
<div class="t" style="left:1362.94px;top:520px;font-size:11.8px;line-height:14px;color:#333;transform:scaleX(1.0550);transform-origin:100% 50%;">123,336</div>
<div class="t" style="left:1451.84px;top:520px;font-size:11.8px;line-height:14px;color:#333;transform:scaleX(1.0550);transform-origin:100% 50%;">120,420</div>
<div class="t" style="left:1529.08px;top:520px;font-size:11.8px;line-height:14px;color:#333;transform:scaleX(1.0550);transform-origin:100% 50%;">(122,287)</div>
<div class="t" style="left:36.6px;top:540px;font-size:11.8px;line-height:14px;color:#808080;transform:scaleX(1.0575);transform-origin:0 50%;">44300</div>
<div class="t" style="left:95.2px;top:540px;font-size:11.9px;line-height:14px;color:#333;transform:scaleX(1.0047);transform-origin:0 50%;">Sales, Retail - Export</div>
<div class="t" style="left:341.34px;top:540px;font-size:11.8px;line-height:14px;color:#333;transform:scaleX(1.0550);transform-origin:100% 50%;">310,940</div>
<div class="t" style="left:428.96px;top:540px;font-size:11.8px;line-height:14px;color:#333;transform:scaleX(1.0550);transform-origin:100% 50%;">14,556</div>
<div class="t" style="left:506.81px;top:540px;font-size:11.8px;line-height:14px;color:#333;transform:scaleX(1.0550);transform-origin:100% 50%;">34,585</div>
<div class="t" style="left:584.66px;top:540px;font-size:11.8px;line-height:14px;color:#333;transform:scaleX(1.0550);transform-origin:100% 50%;">17,503</div>
<div class="t" style="left:662.51px;top:540px;font-size:11.8px;line-height:14px;color:#333;transform:scaleX(1.0550);transform-origin:100% 50%;">24,044</div>
<div class="t" style="left:740.36px;top:540px;font-size:11.8px;line-height:14px;color:#333;transform:scaleX(1.0550);transform-origin:100% 50%;">36,196</div>
<div class="t" style="left:811.64px;top:540px;font-size:11.8px;line-height:14px;color:#333;transform:scaleX(1.0550);transform-origin:100% 50%;">125,476</div>
<div class="t" style="left:902.62px;top:540px;font-size:11.8px;line-height:14px;color:#333;transform:scaleX(1.0550);transform-origin:100% 50%;">2,740</div>
<div class="t" style="left:973.91px;top:540px;font-size:11.8px;line-height:14px;color:#333;transform:scaleX(1.0550);transform-origin:100% 50%;">10,430</div>
<div class="t" style="left:1051.76px;top:540px;font-size:11.8px;line-height:14px;color:#333;transform:scaleX(1.0550);transform-origin:100% 50%;">33,730</div>
<div class="t" style="left:1129.61px;top:540px;font-size:11.8px;line-height:14px;color:#333;transform:scaleX(1.0550);transform-origin:100% 50%;">22,880</div>
<div class="t" style="left:1207.46px;top:540px;font-size:11.8px;line-height:14px;color:#333;transform:scaleX(1.0550);transform-origin:100% 50%;">32,940</div>
<div class="t" style="left:1285.31px;top:540px;font-size:11.8px;line-height:14px;color:#333;transform:scaleX(1.0550);transform-origin:100% 50%;">55,530</div>
<div class="t" style="left:1362.94px;top:540px;font-size:11.8px;line-height:14px;color:#333;transform:scaleX(1.0550);transform-origin:100% 50%;">410,609</div>
<div class="t" style="left:1451.84px;top:540px;font-size:11.8px;line-height:14px;color:#333;transform:scaleX(1.0550);transform-origin:100% 50%;">253,800</div>
<div class="t" style="left:1539.11px;top:540px;font-size:11.8px;line-height:14px;color:#333;transform:scaleX(1.0550);transform-origin:100% 50%;">99,669</div>
<div class="t" style="left:36.6px;top:561px;font-size:11.8px;line-height:14px;color:#808080;transform:scaleX(1.0575);transform-origin:0 50%;">45000</div>
<div class="t" style="left:95.2px;top:561px;font-size:11.9px;line-height:14px;color:#333;transform:scaleX(1.0144);transform-origin:0 50%;">Consulting Fees - Dom.</div>
<div class="t" style="left:341.34px;top:561px;font-size:11.8px;line-height:14px;color:#333;transform:scaleX(1.0550);transform-origin:100% 50%;">599,955</div>
<div class="t" style="left:428.96px;top:561px;font-size:11.8px;line-height:14px;color:#333;transform:scaleX(1.0550);transform-origin:100% 50%;">42,250</div>
<div class="t" style="left:506.81px;top:561px;font-size:11.8px;line-height:14px;color:#333;transform:scaleX(1.0550);transform-origin:100% 50%;">52,813</div>
<div class="t" style="left:584.66px;top:561px;font-size:11.8px;line-height:14px;color:#333;transform:scaleX(1.0550);transform-origin:100% 50%;">52,813</div>
<div class="t" style="left:662.51px;top:561px;font-size:11.8px;line-height:14px;color:#333;transform:scaleX(1.0550);transform-origin:100% 50%;">47,666</div>
<div class="t" style="left:740.36px;top:561px;font-size:11.8px;line-height:14px;color:#333;transform:scaleX(1.0550);transform-origin:100% 50%;">63,051</div>
<div class="t" style="left:811.64px;top:561px;font-size:11.8px;line-height:14px;color:#333;transform:scaleX(1.0550);transform-origin:100% 50%;">251,106</div>
<div class="t" style="left:896.06px;top:561px;font-size:11.8px;line-height:14px;color:#333;transform:scaleX(1.0550);transform-origin:100% 50%;">37,360</div>
<div class="t" style="left:973.91px;top:561px;font-size:11.8px;line-height:14px;color:#333;transform:scaleX(1.0550);transform-origin:100% 50%;">44,470</div>
<div class="t" style="left:1051.76px;top:561px;font-size:11.8px;line-height:14px;color:#333;transform:scaleX(1.0550);transform-origin:100% 50%;">73,540</div>
<div class="t" style="left:1129.61px;top:561px;font-size:11.8px;line-height:14px;color:#333;transform:scaleX(1.0550);transform-origin:100% 50%;">44,940</div>
<div class="t" style="left:1207.46px;top:561px;font-size:11.8px;line-height:14px;color:#333;transform:scaleX(1.0550);transform-origin:100% 50%;">29,320</div>
<div class="t" style="left:1285.31px;top:561px;font-size:11.8px;line-height:14px;color:#333;transform:scaleX(1.0550);transform-origin:100% 50%;">43,660</div>
<div class="t" style="left:1362.94px;top:561px;font-size:11.8px;line-height:14px;color:#333;transform:scaleX(1.0550);transform-origin:100% 50%;">782,988</div>
<div class="t" style="left:1451.84px;top:561px;font-size:11.8px;line-height:14px;color:#333;transform:scaleX(1.0550);transform-origin:100% 50%;">572,810</div>
<div class="t" style="left:1532.54px;top:561px;font-size:11.8px;line-height:14px;color:#333;transform:scaleX(1.0550);transform-origin:100% 50%;">183,033</div>
<div class="t" style="left:36.6px;top:581px;font-size:11.8px;line-height:14px;color:#808080;transform:scaleX(1.0575);transform-origin:0 50%;">45100</div>
<div class="t" style="left:95.2px;top:581px;font-size:11.9px;line-height:14px;color:#333;transform:scaleX(0.9885);transform-origin:0 50%;">Fees and Charges Rec. - Dom.</div>
<div class="t" style="left:354.47px;top:581px;font-size:11.8px;line-height:14px;color:#333;transform:scaleX(1.0550);transform-origin:100% 50%;">2,781</div>
<div class="t" style="left:451.92px;top:581px;font-size:11.8px;line-height:14px;color:#333;transform:scaleX(1.0550);transform-origin:100% 50%;">95</div>
<div class="t" style="left:523.21px;top:581px;font-size:11.8px;line-height:14px;color:#333;transform:scaleX(1.0550);transform-origin:100% 50%;">379</div>
<div class="t" style="left:604.19px;top:581px;font-size:11.8px;line-height:14px;color:#333;transform:scaleX(1.0550);transform-origin:50% 50%;">-</div>
<div class="t" style="left:678.91px;top:581px;font-size:11.8px;line-height:14px;color:#333;transform:scaleX(1.0550);transform-origin:100% 50%;">453</div>
<div class="t" style="left:759.89px;top:581px;font-size:11.8px;line-height:14px;color:#333;transform:scaleX(1.0550);transform-origin:50% 50%;">-</div>
<div class="t" style="left:837.74px;top:581px;font-size:11.8px;line-height:14px;color:#333;transform:scaleX(1.0550);transform-origin:50% 50%;">-</div>
<div class="t" style="left:915.59px;top:581px;font-size:11.8px;line-height:14px;color:#333;transform:scaleX(1.0550);transform-origin:50% 50%;">-</div>
<div class="t" style="left:990.31px;top:581px;font-size:11.8px;line-height:14px;color:#333;transform:scaleX(1.0550);transform-origin:100% 50%;">250</div>
<div class="t" style="left:1068.16px;top:581px;font-size:11.8px;line-height:14px;color:#333;transform:scaleX(1.0550);transform-origin:100% 50%;">200</div>
<div class="t" style="left:1146.01px;top:581px;font-size:11.8px;line-height:14px;color:#333;transform:scaleX(1.0550);transform-origin:100% 50%;">430</div>
<div class="t" style="left:1223.86px;top:581px;font-size:11.8px;line-height:14px;color:#333;transform:scaleX(1.0550);transform-origin:100% 50%;">420</div>
<div class="t" style="left:1301.71px;top:581px;font-size:11.8px;line-height:14px;color:#333;transform:scaleX(1.0550);transform-origin:100% 50%;">510</div>
<div class="t" style="left:1376.07px;top:581px;font-size:11.8px;line-height:14px;color:#333;transform:scaleX(1.0550);transform-origin:100% 50%;">2,736</div>
<div class="t" style="left:1464.97px;top:581px;font-size:11.8px;line-height:14px;color:#333;transform:scaleX(1.0550);transform-origin:100% 50%;">2,850</div>
<div class="t" style="left:1558.61px;top:581px;font-size:11.8px;line-height:14px;color:#333;transform:scaleX(1.0550);transform-origin:100% 50%;">(45)</div>
<div class="t" style="left:36.6px;top:602px;font-size:11.8px;line-height:14px;color:#808080;transform:scaleX(1.0575);transform-origin:0 50%;">45200</div>
<div class="t" style="left:95.2px;top:602px;font-size:11.9px;line-height:14px;color:#333;transform:scaleX(1.0453);transform-origin:0 50%;">Discount Granted</div>
<div class="t" style="left:344.45px;top:602px;font-size:11.8px;line-height:14px;color:#333;transform:scaleX(1.0550);transform-origin:100% 50%;">(49,202)</div>
<div class="t" style="left:432.06px;top:602px;font-size:11.8px;line-height:14px;color:#333;transform:scaleX(1.0550);transform-origin:100% 50%;">(7,704)</div>
<div class="t" style="left:509.91px;top:602px;font-size:11.8px;line-height:14px;color:#333;transform:scaleX(1.0550);transform-origin:100% 50%;">(7,513)</div>
<div class="t" style="left:587.76px;top:602px;font-size:11.8px;line-height:14px;color:#333;transform:scaleX(1.0550);transform-origin:100% 50%;">(7,915)</div>
<div class="t" style="left:665.61px;top:602px;font-size:11.8px;line-height:14px;color:#333;transform:scaleX(1.0550);transform-origin:100% 50%;">(6,839)</div>
<div class="t" style="left:743.46px;top:602px;font-size:11.8px;line-height:14px;color:#333;transform:scaleX(1.0550);transform-origin:100% 50%;">(7,319)</div>
<div class="t" style="left:821.31px;top:602px;font-size:11.8px;line-height:14px;color:#333;transform:scaleX(1.0550);transform-origin:100% 50%;">(3,010)</div>
<div class="t" style="left:915.59px;top:602px;font-size:11.8px;line-height:14px;color:#333;transform:scaleX(1.0550);transform-origin:50% 50%;">-</div>
<div class="t" style="left:993.44px;top:602px;font-size:11.8px;line-height:14px;color:#333;transform:scaleX(1.0550);transform-origin:50% 50%;">-</div>
<div class="t" style="left:1071.29px;top:602px;font-size:11.8px;line-height:14px;color:#333;transform:scaleX(1.0550);transform-origin:50% 50%;">-</div>
<div class="t" style="left:1149.14px;top:602px;font-size:11.8px;line-height:14px;color:#333;transform:scaleX(1.0550);transform-origin:50% 50%;">-</div>
<div class="t" style="left:1226.99px;top:602px;font-size:11.8px;line-height:14px;color:#333;transform:scaleX(1.0550);transform-origin:50% 50%;">-</div>
<div class="t" style="left:1304.84px;top:602px;font-size:11.8px;line-height:14px;color:#333;transform:scaleX(1.0550);transform-origin:50% 50%;">-</div>
<div class="t" style="left:1366.05px;top:602px;font-size:11.8px;line-height:14px;color:#333;transform:scaleX(1.0550);transform-origin:100% 50%;">(40,299)</div>
<div class="t" style="left:1477.94px;top:602px;font-size:11.8px;line-height:14px;color:#333;transform:scaleX(1.0550);transform-origin:50% 50%;">-</div>
<div class="t" style="left:1545.67px;top:602px;font-size:11.8px;line-height:14px;color:#333;transform:scaleX(1.0550);transform-origin:100% 50%;">8,903</div>
<div class="a" style="left:3px;top:616.2px;width:388.2px;height:21.6px;background:#d9e2f3;border-top:1px solid #000;border-bottom:2px solid #000;"></div>
<div class="a" style="left:394.2px;top:616.2px;width:1019.8px;height:21.6px;background:#d9e2f3;border-top:1px solid #000;border-bottom:2px solid #000;"></div>
<div class="a" style="left:1417px;top:616.2px;width:84.3px;height:21.6px;background:#d9e2f3;border-top:1px solid #000;border-bottom:2px solid #000;"></div>
<div class="a" style="left:1505px;top:616.2px;width:114px;height:21.6px;background:#d9e2f3;border-top:1px solid #000;border-bottom:2px solid #000;"></div>
<div class="t" style="left:5px;top:623px;font-size:12.3px;line-height:14px;color:#000;font-weight:700;transform:scaleX(0.8974);transform-origin:0 50%;">TOTAL REVENUE</div>
<div class="t" style="left:315.1px;top:623px;font-size:11.8px;line-height:14px;color:#000;font-weight:700;transform:scaleX(1.0300);transform-origin:100% 50%;">$ 20,643,768</div>
<div class="t" style="left:402.71px;top:623px;font-size:11.8px;line-height:14px;color:#000;font-weight:700;transform:scaleX(1.0300);transform-origin:100% 50%;">$ 1,490,866</div>
<div class="t" style="left:480.56px;top:623px;font-size:11.8px;line-height:14px;color:#000;font-weight:700;transform:scaleX(1.0300);transform-origin:100% 50%;">$ 1,831,704</div>
<div class="t" style="left:558.41px;top:623px;font-size:11.8px;line-height:14px;color:#000;font-weight:700;transform:scaleX(1.0300);transform-origin:100% 50%;">$ 1,553,706</div>
<div class="t" style="left:636.26px;top:623px;font-size:11.8px;line-height:14px;color:#000;font-weight:700;transform:scaleX(1.0300);transform-origin:100% 50%;">$ 1,590,832</div>
<div class="t" style="left:714.11px;top:623px;font-size:11.8px;line-height:14px;color:#000;font-weight:700;transform:scaleX(1.0300);transform-origin:100% 50%;">$ 1,827,516</div>
<div class="t" style="left:791.96px;top:623px;font-size:11.8px;line-height:14px;color:#000;font-weight:700;transform:scaleX(1.0300);transform-origin:100% 50%;">$ 1,624,571</div>
<div class="t" style="left:869.81px;top:623px;font-size:11.8px;line-height:14px;color:#000;font-weight:700;transform:scaleX(1.0300);transform-origin:100% 50%;">$ 1,286,240</div>
<div class="t" style="left:947.66px;top:623px;font-size:11.8px;line-height:14px;color:#000;font-weight:700;transform:scaleX(1.0300);transform-origin:100% 50%;">$ 2,392,320</div>
<div class="t" style="left:1025.51px;top:623px;font-size:11.8px;line-height:14px;color:#000;font-weight:700;transform:scaleX(1.0300);transform-origin:100% 50%;">$ 1,778,020</div>
<div class="t" style="left:1103.36px;top:623px;font-size:11.8px;line-height:14px;color:#000;font-weight:700;transform:scaleX(1.0300);transform-origin:100% 50%;">$ 1,975,620</div>
<div class="t" style="left:1181.21px;top:623px;font-size:11.8px;line-height:14px;color:#000;font-weight:700;transform:scaleX(1.0300);transform-origin:100% 50%;">$ 1,771,760</div>
<div class="t" style="left:1259.06px;top:623px;font-size:11.8px;line-height:14px;color:#000;font-weight:700;transform:scaleX(1.0300);transform-origin:100% 50%;">$ 2,248,520</div>
<div class="t" style="left:1336.7px;top:623px;font-size:11.8px;line-height:14px;color:#000;font-weight:700;transform:scaleX(1.0300);transform-origin:100% 50%;">$ 21,371,675</div>
<div class="t" style="left:1425.6px;top:623px;font-size:11.8px;line-height:14px;color:#000;font-weight:700;transform:scaleX(1.0300);transform-origin:100% 50%;">$ 18,805,700</div>
<div class="t" style="left:1510.5px;top:623px;font-size:11.8px;line-height:14px;color:#000;font-weight:700;">$</div>
<div class="t" style="left:1532.54px;top:623px;font-size:11.8px;line-height:14px;color:#000;font-weight:700;transform:scaleX(1.0300);transform-origin:100% 50%;">727,907</div>
<div class="t" style="left:5px;top:643px;font-size:12.3px;line-height:14px;color:#262626;transform:scaleX(0.8857);transform-origin:0 50%;">COST OF GOODS SOLD</div>
<div class="t" style="left:36.6px;top:664px;font-size:11.8px;line-height:14px;color:#808080;transform:scaleX(1.0575);transform-origin:0 50%;">53100</div>
<div class="t" style="left:95.2px;top:664px;font-size:11.9px;line-height:14px;color:#333;transform:scaleX(1.0380);transform-origin:0 50%;">Purch., Raw Materials - Dom.</div>
<div class="t" style="left:331.5px;top:664px;font-size:11.8px;line-height:14px;color:#333;transform:scaleX(1.0550);transform-origin:100% 50%;">6,736,418</div>
<div class="t" style="left:422.39px;top:664px;font-size:11.8px;line-height:14px;color:#333;transform:scaleX(1.0550);transform-origin:100% 50%;">508,696</div>
<div class="t" style="left:500.24px;top:664px;font-size:11.8px;line-height:14px;color:#333;transform:scaleX(1.0550);transform-origin:100% 50%;">681,162</div>
<div class="t" style="left:578.09px;top:664px;font-size:11.8px;line-height:14px;color:#333;transform:scaleX(1.0550);transform-origin:100% 50%;">520,560</div>
<div class="t" style="left:655.94px;top:664px;font-size:11.8px;line-height:14px;color:#333;transform:scaleX(1.0550);transform-origin:100% 50%;">486,786</div>
<div class="t" style="left:733.79px;top:664px;font-size:11.8px;line-height:14px;color:#333;transform:scaleX(1.0550);transform-origin:100% 50%;">537,974</div>
<div class="t" style="left:811.64px;top:664px;font-size:11.8px;line-height:14px;color:#333;transform:scaleX(1.0550);transform-origin:100% 50%;">628,608</div>
<div class="t" style="left:889.49px;top:664px;font-size:11.8px;line-height:14px;color:#333;transform:scaleX(1.0550);transform-origin:100% 50%;">362,850</div>
<div class="t" style="left:967.34px;top:664px;font-size:11.8px;line-height:14px;color:#333;transform:scaleX(1.0550);transform-origin:100% 50%;">633,520</div>
<div class="t" style="left:1045.19px;top:664px;font-size:11.8px;line-height:14px;color:#333;transform:scaleX(1.0550);transform-origin:100% 50%;">576,830</div>
<div class="t" style="left:1123.04px;top:664px;font-size:11.8px;line-height:14px;color:#333;transform:scaleX(1.0550);transform-origin:100% 50%;">485,250</div>
<div class="t" style="left:1200.89px;top:664px;font-size:11.8px;line-height:14px;color:#333;transform:scaleX(1.0550);transform-origin:100% 50%;">555,270</div>
<div class="t" style="left:1278.74px;top:664px;font-size:11.8px;line-height:14px;color:#333;transform:scaleX(1.0550);transform-origin:100% 50%;">669,610</div>
<div class="t" style="left:1353.98px;top:664px;font-size:11.8px;line-height:14px;color:#333;transform:scaleX(1.0550);transform-origin:100% 50%;">6,647,115</div>
<div class="t" style="left:1442px;top:664px;font-size:11.8px;line-height:14px;color:#333;transform:scaleX(1.0550);transform-origin:100% 50%;">6,741,920</div>
<div class="t" style="left:1535.65px;top:664px;font-size:11.8px;line-height:14px;color:#333;transform:scaleX(1.0550);transform-origin:100% 50%;">(89,304)</div>
<div class="t" style="left:36.6px;top:684px;font-size:11.8px;line-height:14px;color:#808080;transform:scaleX(1.0575);transform-origin:0 50%;">53150</div>
<div class="t" style="left:95.2px;top:684px;font-size:11.9px;line-height:14px;color:#333;transform:scaleX(1.0230);transform-origin:0 50%;">Purch., Raw Materials - EU</div>
<div class="t" style="left:341.34px;top:684px;font-size:11.8px;line-height:14px;color:#333;transform:scaleX(1.0550);transform-origin:100% 50%;">628,535</div>
<div class="t" style="left:422.39px;top:684px;font-size:11.8px;line-height:14px;color:#333;transform:scaleX(1.0550);transform-origin:100% 50%;">201,393</div>
<div class="t" style="left:500.24px;top:684px;font-size:11.8px;line-height:14px;color:#333;transform:scaleX(1.0550);transform-origin:100% 50%;">122,771</div>
<div class="t" style="left:584.66px;top:684px;font-size:11.8px;line-height:14px;color:#333;transform:scaleX(1.0550);transform-origin:100% 50%;">15,878</div>
<div class="t" style="left:669.07px;top:684px;font-size:11.8px;line-height:14px;color:#333;transform:scaleX(1.0550);transform-origin:100% 50%;">3,946</div>
<div class="t" style="left:740.36px;top:684px;font-size:11.8px;line-height:14px;color:#333;transform:scaleX(1.0550);transform-origin:100% 50%;">22,035</div>
<div class="t" style="left:818.21px;top:684px;font-size:11.8px;line-height:14px;color:#333;transform:scaleX(1.0550);transform-origin:100% 50%;">43,878</div>
<div class="t" style="left:980.47px;top:684px;font-size:11.8px;line-height:14px;color:#333;transform:scaleX(1.0550);transform-origin:100% 50%;">2,160</div>
<div class="t" style="left:1045.19px;top:684px;font-size:11.8px;line-height:14px;color:#333;transform:scaleX(1.0550);transform-origin:100% 50%;">229,830</div>
<div class="t" style="left:1207.46px;top:684px;font-size:11.8px;line-height:14px;color:#333;transform:scaleX(1.0550);transform-origin:100% 50%;">10,800</div>
<div class="t" style="left:1301.71px;top:684px;font-size:11.8px;line-height:14px;color:#333;transform:scaleX(1.0550);transform-origin:100% 50%;">280</div>
<div class="t" style="left:1362.94px;top:684px;font-size:11.8px;line-height:14px;color:#333;transform:scaleX(1.0550);transform-origin:100% 50%;">652,971</div>
<div class="t" style="left:1451.84px;top:684px;font-size:11.8px;line-height:14px;color:#333;transform:scaleX(1.0550);transform-origin:100% 50%;">666,440</div>
<div class="t" style="left:1539.11px;top:684px;font-size:11.8px;line-height:14px;color:#333;transform:scaleX(1.0550);transform-origin:100% 50%;">24,435</div>
<div class="t" style="left:36.6px;top:704px;font-size:11.8px;line-height:14px;color:#808080;transform:scaleX(1.0575);transform-origin:0 50%;">53200</div>
<div class="t" style="left:95.2px;top:704px;font-size:11.9px;line-height:14px;color:#333;transform:scaleX(1.0399);transform-origin:0 50%;">Purch., Raw Materials - Export</div>
<div class="t" style="left:341.34px;top:704px;font-size:11.8px;line-height:14px;color:#333;transform:scaleX(1.0550);transform-origin:100% 50%;">758,716</div>
<div class="t" style="left:578.09px;top:704px;font-size:11.8px;line-height:14px;color:#333;transform:scaleX(1.0550);transform-origin:100% 50%;">150,493</div>
<div class="t" style="left:655.94px;top:704px;font-size:11.8px;line-height:14px;color:#333;transform:scaleX(1.0550);transform-origin:100% 50%;">100,100</div>
<div class="t" style="left:746.92px;top:704px;font-size:11.8px;line-height:14px;color:#333;transform:scaleX(1.0550);transform-origin:100% 50%;">7,347</div>
<div class="t" style="left:824.77px;top:704px;font-size:11.8px;line-height:14px;color:#333;transform:scaleX(1.0550);transform-origin:100% 50%;">3,547</div>
<div class="t" style="left:889.49px;top:704px;font-size:11.8px;line-height:14px;color:#333;transform:scaleX(1.0550);transform-origin:100% 50%;">136,010</div>
<div class="t" style="left:1058.32px;top:704px;font-size:11.8px;line-height:14px;color:#333;transform:scaleX(1.0550);transform-origin:100% 50%;">3,790</div>
<div class="t" style="left:1123.04px;top:704px;font-size:11.8px;line-height:14px;color:#333;transform:scaleX(1.0550);transform-origin:100% 50%;">167,040</div>
<div class="t" style="left:1285.31px;top:704px;font-size:11.8px;line-height:14px;color:#333;transform:scaleX(1.0550);transform-origin:100% 50%;">94,020</div>
<div class="t" style="left:1362.94px;top:704px;font-size:11.8px;line-height:14px;color:#333;transform:scaleX(1.0550);transform-origin:100% 50%;">742,015</div>
<div class="t" style="left:1451.84px;top:704px;font-size:11.8px;line-height:14px;color:#333;transform:scaleX(1.0550);transform-origin:100% 50%;">752,700</div>
<div class="t" style="left:1542.21px;top:704px;font-size:11.8px;line-height:14px;color:#333;transform:scaleX(1.0550);transform-origin:100% 50%;">(7,701)</div>
<svg class="a" style="left:4px;top:80.6px;" width="400" height="211" viewBox="0 0 400 211"><rect width="399.2" height="211" fill="#dae3f3"/><text x="200" y="25.9" font-size="14" fill="#606060" font-family="Liberation Sans, sans-serif" text-anchor="middle" font-weight="bold" textLength="84" lengthAdjust="spacingAndGlyphs">P&amp;L Metrics</text><text x="82.3" y="52.2" font-size="10.4" fill="#606060" font-family="Liberation Sans, sans-serif" text-anchor="end" textLength="60.44" lengthAdjust="spacingAndGlyphs">$25,000,000</text><text x="82.3" y="70.2" font-size="10.4" fill="#606060" font-family="Liberation Sans, sans-serif" text-anchor="end" textLength="60.44" lengthAdjust="spacingAndGlyphs">$20,000,000</text><text x="82.3" y="87.2" font-size="10.4" fill="#606060" font-family="Liberation Sans, sans-serif" text-anchor="end" textLength="60.44" lengthAdjust="spacingAndGlyphs">$15,000,000</text><text x="82.3" y="104.2" font-size="10.4" fill="#606060" font-family="Liberation Sans, sans-serif" text-anchor="end" textLength="60.44" lengthAdjust="spacingAndGlyphs">$10,000,000</text><text x="82.3" y="121.2" font-size="10.4" fill="#606060" font-family="Liberation Sans, sans-serif" text-anchor="end" textLength="54.39" lengthAdjust="spacingAndGlyphs">$5,000,000</text><text x="82.3" y="138.2" font-size="10.4" fill="#606060" font-family="Liberation Sans, sans-serif" text-anchor="end" textLength="9.66" lengthAdjust="spacingAndGlyphs">$-</text><rect x="85" y="135.4" width="305" height="1" fill="#d3d6dd"/><rect x="107.2" y="64.5" width="22.4" height="70.9" fill="#4472c4"/><rect x="129.6" y="62.2" width="22.4" height="73.2" fill="#ed7d31"/><rect x="152" y="70.3" width="22.4" height="65.1" fill="#70ad47"/><rect x="207" y="99.5" width="22.4" height="35.9" fill="#4472c4"/><rect x="229.4" y="97.2" width="22.4" height="38.2" fill="#ed7d31"/><rect x="251.8" y="106" width="22.4" height="29.4" fill="#70ad47"/><rect x="307" y="124" width="22.4" height="11.4" fill="#4472c4"/><rect x="329.4" y="122" width="22.4" height="13.4" fill="#ed7d31"/><rect x="351.8" y="131.3" width="22.4" height="4.1" fill="#70ad47"/><text x="141" y="152.4" font-size="10.4" fill="#606060" font-family="Liberation Sans, sans-serif" text-anchor="middle" textLength="48" lengthAdjust="spacingAndGlyphs">REVENUE</text><text x="240.3" y="152.4" font-size="10.4" fill="#606060" font-family="Liberation Sans, sans-serif" text-anchor="middle" textLength="72" lengthAdjust="spacingAndGlyphs">GROSS PROFIT</text><text x="339.5" y="152.4" font-size="10.4" fill="#606060" font-family="Liberation Sans, sans-serif" text-anchor="middle" textLength="58" lengthAdjust="spacingAndGlyphs">OPERATING</text><text x="339.5" y="167.4" font-size="10.4" fill="#606060" font-family="Liberation Sans, sans-serif" text-anchor="middle" textLength="41" lengthAdjust="spacingAndGlyphs">INCOME</text><rect x="105" y="186.9" width="8" height="8" fill="#4472c4"/><text x="115" y="194.7" font-size="11.2" fill="#606060" font-family="Liberation Sans, sans-serif" textLength="44" lengthAdjust="spacingAndGlyphs">2016 Act</text><rect x="173" y="186.9" width="8" height="8" fill="#ed7d31"/><text x="183" y="194.7" font-size="11.2" fill="#606060" font-family="Liberation Sans, sans-serif" textLength="44" lengthAdjust="spacingAndGlyphs">2017 Act</text><rect x="240.5" y="186.9" width="8" height="8" fill="#70ad47"/><text x="250.5" y="194.7" font-size="11.2" fill="#606060" font-family="Liberation Sans, sans-serif" textLength="47.5" lengthAdjust="spacingAndGlyphs">2017 Bud</text></svg>
<svg class="a" style="left:425px;top:80.6px;" width="400" height="211" viewBox="0 0 400 211"><rect width="400" height="211" fill="#dae3f3"/><text x="200.5" y="25.9" font-size="14" fill="#606060" font-family="Liberation Sans, sans-serif" text-anchor="middle" font-weight="bold" textLength="60" lengthAdjust="spacingAndGlyphs">Revenue</text><text x="65.7" y="40.4" font-size="10.4" fill="#606060" font-family="Liberation Sans, sans-serif" text-anchor="end" textLength="54.39" lengthAdjust="spacingAndGlyphs">$2,500,000</text><text x="65.7" y="63.4" font-size="10.4" fill="#606060" font-family="Liberation Sans, sans-serif" text-anchor="end" textLength="54.39" lengthAdjust="spacingAndGlyphs">$2,000,000</text><text x="65.7" y="86.5" font-size="10.4" fill="#606060" font-family="Liberation Sans, sans-serif" text-anchor="end" textLength="54.39" lengthAdjust="spacingAndGlyphs">$1,500,000</text><text x="65.7" y="109.6" font-size="10.4" fill="#606060" font-family="Liberation Sans, sans-serif" text-anchor="end" textLength="54.39" lengthAdjust="spacingAndGlyphs">$1,000,000</text><text x="65.7" y="132.5" font-size="10.4" fill="#606060" font-family="Liberation Sans, sans-serif" text-anchor="end" textLength="45.33" lengthAdjust="spacingAndGlyphs">$500,000</text><text x="65.7" y="149.4" font-size="10.4" fill="#606060" font-family="Liberation Sans, sans-serif" text-anchor="end" transform="rotate(-45 65.7 149.4)">$-</text><rect x="74.5" y="152.6" width="318" height="1" fill="#d3d6dd"/><rect x="82.5" y="82.4" width="6.2" height="70.2" fill="#4472c4"/><rect x="108.85" y="67.8" width="6.2" height="84.8" fill="#4472c4"/><rect x="135.2" y="74.5" width="6.2" height="78.1" fill="#4472c4"/><rect x="161.55" y="78.8" width="6.2" height="73.8" fill="#4472c4"/><rect x="187.9" y="67.8" width="6.2" height="84.8" fill="#4472c4"/><rect x="214.25" y="79.8" width="6.2" height="72.8" fill="#4472c4"/><rect x="240.6" y="97.8" width="6.2" height="54.8" fill="#4472c4"/><rect x="266.95" y="78.8" width="6.2" height="73.8" fill="#4472c4"/><rect x="293.3" y="77.4" width="6.2" height="75.2" fill="#4472c4"/><rect x="319.65" y="60.1" width="6.2" height="92.5" fill="#4472c4"/><rect x="346" y="55.8" width="6.2" height="96.8" fill="#4472c4"/><rect x="372.35" y="54.1" width="6.2" height="98.5" fill="#4472c4"/><rect x="88.7" y="83.6" width="6.2" height="69" fill="#ed7d31"/><rect x="115.05" y="67.8" width="6.2" height="84.8" fill="#ed7d31"/><rect x="141.4" y="81" width="6.2" height="71.6" fill="#ed7d31"/><rect x="167.75" y="80.5" width="6.2" height="72.1" fill="#ed7d31"/><rect x="194.1" y="69" width="6.2" height="83.6" fill="#ed7d31"/><rect x="220.45" y="77.6" width="6.2" height="75" fill="#ed7d31"/><rect x="246.8" y="93.7" width="6.2" height="58.9" fill="#ed7d31"/><polyline points="88.7,82.9 115.05,68.5 141.4,84.1 167.75,82.9 194.1,73.3 220.45,61.5 246.8,98.5 273.15,85.3 299.5,65.6 325.85,60.6 352.2,65.6 378.55,49.8" fill="none" stroke="#70ad47" stroke-width="2" stroke-linejoin="round" stroke-linecap="round"/><text x="84.7" y="165.6" font-size="10.4" fill="#606060" font-family="Liberation Sans, sans-serif" text-anchor="end" transform="rotate(-45 84.7 162.6)">Jan</text><text x="111.05" y="165.6" font-size="10.4" fill="#606060" font-family="Liberation Sans, sans-serif" text-anchor="end" transform="rotate(-45 111.05 162.6)">Feb</text><text x="137.4" y="165.6" font-size="10.4" fill="#606060" font-family="Liberation Sans, sans-serif" text-anchor="end" transform="rotate(-45 137.4 162.6)">Mar</text><text x="163.75" y="165.6" font-size="10.4" fill="#606060" font-family="Liberation Sans, sans-serif" text-anchor="end" transform="rotate(-45 163.75 162.6)">Apr</text><text x="190.1" y="165.6" font-size="10.4" fill="#606060" font-family="Liberation Sans, sans-serif" text-anchor="end" transform="rotate(-45 190.1 162.6)">May</text><text x="216.45" y="165.6" font-size="10.4" fill="#606060" font-family="Liberation Sans, sans-serif" text-anchor="end" transform="rotate(-45 216.45 162.6)">Jun</text><text x="242.8" y="165.6" font-size="10.4" fill="#606060" font-family="Liberation Sans, sans-serif" text-anchor="end" transform="rotate(-45 242.8 162.6)">Jul</text><text x="269.15" y="165.6" font-size="10.4" fill="#606060" font-family="Liberation Sans, sans-serif" text-anchor="end" transform="rotate(-45 269.15 162.6)">Aug</text><text x="295.5" y="165.6" font-size="10.4" fill="#606060" font-family="Liberation Sans, sans-serif" text-anchor="end" transform="rotate(-45 295.5 162.6)">Sep</text><text x="321.85" y="165.6" font-size="10.4" fill="#606060" font-family="Liberation Sans, sans-serif" text-anchor="end" transform="rotate(-45 321.85 162.6)">Oct</text><text x="348.2" y="165.6" font-size="10.4" fill="#606060" font-family="Liberation Sans, sans-serif" text-anchor="end" transform="rotate(-45 348.2 162.6)">Nov</text><text x="374.55" y="165.6" font-size="10.4" fill="#606060" font-family="Liberation Sans, sans-serif" text-anchor="end" transform="rotate(-45 374.55 162.6)">Dec</text><rect x="69.3" y="186.9" width="28.5" height="7" fill="#4472c4"/><text x="99.8" y="194.6" font-size="11.2" fill="#606060" font-family="Liberation Sans, sans-serif" textLength="44" lengthAdjust="spacingAndGlyphs">2016 Act</text><rect x="162" y="186.9" width="28.5" height="7" fill="#ed7d31"/><text x="192.5" y="194.6" font-size="11.2" fill="#606060" font-family="Liberation Sans, sans-serif" textLength="44" lengthAdjust="spacingAndGlyphs">2017 Act</text><rect x="255.3" y="189.7" width="28.5" height="1.6" fill="#70ad47"/><text x="285.8" y="194.6" font-size="11.2" fill="#606060" font-family="Liberation Sans, sans-serif" textLength="47.5" lengthAdjust="spacingAndGlyphs">2017 Bud</text></svg>
<svg class="a" style="left:844px;top:80.6px;" width="400.8" height="211" viewBox="0 0 400.8 211"><rect width="400.8" height="211" fill="#dae3f3"/><text x="200.5" y="25.9" font-size="14" fill="#606060" font-family="Liberation Sans, sans-serif" text-anchor="middle" font-weight="bold" textLength="81" lengthAdjust="spacingAndGlyphs">Gross Profit</text><text x="65.7" y="40.3" font-size="10.4" fill="#606060" font-family="Liberation Sans, sans-serif" text-anchor="end" textLength="54.39" lengthAdjust="spacingAndGlyphs">$1,600,000</text><text x="65.7" y="54.5" font-size="10.4" fill="#606060" font-family="Liberation Sans, sans-serif" text-anchor="end" textLength="54.39" lengthAdjust="spacingAndGlyphs">$1,400,000</text><text x="65.7" y="68.8" font-size="10.4" fill="#606060" font-family="Liberation Sans, sans-serif" text-anchor="end" textLength="54.39" lengthAdjust="spacingAndGlyphs">$1,200,000</text><text x="65.7" y="83.6" font-size="10.4" fill="#606060" font-family="Liberation Sans, sans-serif" text-anchor="end" textLength="54.39" lengthAdjust="spacingAndGlyphs">$1,000,000</text><text x="65.7" y="98.4" font-size="10.4" fill="#606060" font-family="Liberation Sans, sans-serif" text-anchor="end" textLength="45.33" lengthAdjust="spacingAndGlyphs">$800,000</text><text x="65.7" y="112.5" font-size="10.4" fill="#606060" font-family="Liberation Sans, sans-serif" text-anchor="end" textLength="45.33" lengthAdjust="spacingAndGlyphs">$600,000</text><text x="65.7" y="126.6" font-size="10.4" fill="#606060" font-family="Liberation Sans, sans-serif" text-anchor="end" textLength="45.33" lengthAdjust="spacingAndGlyphs">$400,000</text><text x="65.7" y="141.2" font-size="10.4" fill="#606060" font-family="Liberation Sans, sans-serif" text-anchor="end" textLength="45.33" lengthAdjust="spacingAndGlyphs">$200,000</text><text x="65.7" y="149.4" font-size="10.4" fill="#606060" font-family="Liberation Sans, sans-serif" text-anchor="end" transform="rotate(-45 65.7 149.4)">$-</text><rect x="74.8" y="152.6" width="318" height="1" fill="#d3d6dd"/><rect x="82.8" y="107.7" width="6.2" height="44.9" fill="#4472c4"/><rect x="109.15" y="93.7" width="6.2" height="58.9" fill="#4472c4"/><rect x="135.5" y="94.7" width="6.2" height="57.9" fill="#4472c4"/><rect x="161.85" y="99" width="6.2" height="53.6" fill="#4472c4"/><rect x="188.2" y="72.8" width="6.2" height="79.8" fill="#4472c4"/><rect x="214.55" y="94.2" width="6.2" height="58.4" fill="#4472c4"/><rect x="240.9" y="117.8" width="6.2" height="34.8" fill="#4472c4"/><rect x="267.25" y="101" width="6.2" height="51.6" fill="#4472c4"/><rect x="293.6" y="101" width="6.2" height="51.6" fill="#4472c4"/><rect x="319.95" y="68" width="6.2" height="84.6" fill="#4472c4"/><rect x="346.3" y="61.8" width="6.2" height="90.8" fill="#4472c4"/><rect x="372.65" y="69.7" width="6.2" height="82.9" fill="#4472c4"/><rect x="89" y="109.6" width="6.2" height="43" fill="#ed7d31"/><rect x="115.35" y="95.4" width="6.2" height="57.2" fill="#ed7d31"/><rect x="141.7" y="105" width="6.2" height="47.6" fill="#ed7d31"/><rect x="168.05" y="100.2" width="6.2" height="52.4" fill="#ed7d31"/><rect x="194.4" y="74.5" width="6.2" height="78.1" fill="#ed7d31"/><rect x="220.75" y="91.3" width="6.2" height="61.3" fill="#ed7d31"/><rect x="247.1" y="106" width="6.2" height="46.6" fill="#ed7d31"/><polyline points="89,108.2 115.35,93.7 141.7,100.2 168.05,100.4 194.4,74.5 220.75,77.6 247.1,113.4 273.45,102.2 299.8,91.3 326.15,69 352.5,69 378.85,47.1" fill="none" stroke="#70ad47" stroke-width="2" stroke-linejoin="round" stroke-linecap="round"/><text x="85" y="165.6" font-size="10.4" fill="#606060" font-family="Liberation Sans, sans-serif" text-anchor="end" transform="rotate(-45 85 162.6)">Jan</text><text x="111.35" y="165.6" font-size="10.4" fill="#606060" font-family="Liberation Sans, sans-serif" text-anchor="end" transform="rotate(-45 111.35 162.6)">Feb</text><text x="137.7" y="165.6" font-size="10.4" fill="#606060" font-family="Liberation Sans, sans-serif" text-anchor="end" transform="rotate(-45 137.7 162.6)">Mar</text><text x="164.05" y="165.6" font-size="10.4" fill="#606060" font-family="Liberation Sans, sans-serif" text-anchor="end" transform="rotate(-45 164.05 162.6)">Apr</text><text x="190.4" y="165.6" font-size="10.4" fill="#606060" font-family="Liberation Sans, sans-serif" text-anchor="end" transform="rotate(-45 190.4 162.6)">May</text><text x="216.75" y="165.6" font-size="10.4" fill="#606060" font-family="Liberation Sans, sans-serif" text-anchor="end" transform="rotate(-45 216.75 162.6)">Jun</text><text x="243.1" y="165.6" font-size="10.4" fill="#606060" font-family="Liberation Sans, sans-serif" text-anchor="end" transform="rotate(-45 243.1 162.6)">Jul</text><text x="269.45" y="165.6" font-size="10.4" fill="#606060" font-family="Liberation Sans, sans-serif" text-anchor="end" transform="rotate(-45 269.45 162.6)">Aug</text><text x="295.8" y="165.6" font-size="10.4" fill="#606060" font-family="Liberation Sans, sans-serif" text-anchor="end" transform="rotate(-45 295.8 162.6)">Sep</text><text x="322.15" y="165.6" font-size="10.4" fill="#606060" font-family="Liberation Sans, sans-serif" text-anchor="end" transform="rotate(-45 322.15 162.6)">Oct</text><text x="348.5" y="165.6" font-size="10.4" fill="#606060" font-family="Liberation Sans, sans-serif" text-anchor="end" transform="rotate(-45 348.5 162.6)">Nov</text><text x="374.85" y="165.6" font-size="10.4" fill="#606060" font-family="Liberation Sans, sans-serif" text-anchor="end" transform="rotate(-45 374.85 162.6)">Dec</text><rect x="69.5" y="186.9" width="28.5" height="7" fill="#4472c4"/><text x="100" y="194.6" font-size="11.2" fill="#606060" font-family="Liberation Sans, sans-serif" textLength="44" lengthAdjust="spacingAndGlyphs">2016 Act</text><rect x="162.2" y="186.9" width="28.5" height="7" fill="#ed7d31"/><text x="192.7" y="194.6" font-size="11.2" fill="#606060" font-family="Liberation Sans, sans-serif" textLength="44" lengthAdjust="spacingAndGlyphs">2017 Act</text><rect x="255.5" y="189.7" width="28.5" height="1.6" fill="#70ad47"/><text x="286" y="194.6" font-size="11.2" fill="#606060" font-family="Liberation Sans, sans-serif" textLength="47.5" lengthAdjust="spacingAndGlyphs">2017 Bud</text></svg>
<svg class="a" style="left:1265px;top:80.6px;" width="400" height="211" viewBox="0 0 400 211"><rect width="400" height="211" fill="#dae3f3"/><text x="198.4" y="25.9" font-size="14" fill="#606060" font-family="Liberation Sans, sans-serif" text-anchor="middle" font-weight="bold" textLength="124" lengthAdjust="spacingAndGlyphs">Operating Income</text><text x="55.4" y="40.5" font-size="10.4" fill="#606060" font-family="Liberation Sans, sans-serif" text-anchor="end" textLength="45.33" lengthAdjust="spacingAndGlyphs">$800,000</text><text x="55.4" y="54.5" font-size="10.4" fill="#606060" font-family="Liberation Sans, sans-serif" text-anchor="end" textLength="45.33" lengthAdjust="spacingAndGlyphs">$700,000</text><text x="55.4" y="68.8" font-size="10.4" fill="#606060" font-family="Liberation Sans, sans-serif" text-anchor="end" textLength="45.33" lengthAdjust="spacingAndGlyphs">$600,000</text><text x="55.4" y="83" font-size="10.4" fill="#606060" font-family="Liberation Sans, sans-serif" text-anchor="end" textLength="45.33" lengthAdjust="spacingAndGlyphs">$500,000</text><text x="55.4" y="98.3" font-size="10.4" fill="#606060" font-family="Liberation Sans, sans-serif" text-anchor="end" textLength="45.33" lengthAdjust="spacingAndGlyphs">$400,000</text><text x="55.4" y="112.3" font-size="10.4" fill="#606060" font-family="Liberation Sans, sans-serif" text-anchor="end" textLength="45.33" lengthAdjust="spacingAndGlyphs">$300,000</text><text x="55.4" y="126.6" font-size="10.4" fill="#606060" font-family="Liberation Sans, sans-serif" text-anchor="end" textLength="45.33" lengthAdjust="spacingAndGlyphs">$200,000</text><text x="55.4" y="141.2" font-size="10.4" fill="#606060" font-family="Liberation Sans, sans-serif" text-anchor="end" textLength="45.33" lengthAdjust="spacingAndGlyphs">$100,000</text><text x="55.4" y="149.4" font-size="10.4" fill="#606060" font-family="Liberation Sans, sans-serif" text-anchor="end" transform="rotate(-45 55.4 149.4)">$-</text><rect x="63.8" y="152.6" width="318" height="1" fill="#d3d6dd"/><rect x="71.8" y="141.5" width="6.8" height="11.1" fill="#4472c4"/><rect x="98.85" y="115.3" width="6.8" height="37.3" fill="#4472c4"/><rect x="125.9" y="121.4" width="6.8" height="31.2" fill="#4472c4"/><rect x="152.95" y="116.3" width="6.8" height="36.3" fill="#4472c4"/><rect x="180" y="80.6" width="6.8" height="72" fill="#4472c4"/><rect x="207.05" y="144.5" width="6.8" height="8.1" fill="#4472c4"/><rect x="234.1" y="147.6" width="6.8" height="5" fill="#4472c4"/><rect x="261.15" y="118.4" width="6.8" height="34.2" fill="#4472c4"/><rect x="288.2" y="138.4" width="6.8" height="14.2" fill="#4472c4"/><rect x="315.25" y="68.7" width="6.8" height="83.9" fill="#4472c4"/><rect x="342.3" y="60.4" width="6.8" height="92.2" fill="#4472c4"/><rect x="369.35" y="55.4" width="6.8" height="97.2" fill="#4472c4"/><rect x="78.6" y="144.5" width="6.8" height="8.1" fill="#ed7d31"/><rect x="105.65" y="116.7" width="6.8" height="35.9" fill="#ed7d31"/><rect x="132.7" y="140.8" width="6.8" height="11.8" fill="#ed7d31"/><rect x="159.75" y="117.7" width="6.8" height="34.9" fill="#ed7d31"/><rect x="186.8" y="67.7" width="6.8" height="84.9" fill="#ed7d31"/><rect x="213.85" y="125.5" width="6.8" height="27.1" fill="#ed7d31"/><rect x="240.9" y="122.4" width="6.8" height="30.2" fill="#ed7d31"/><polyline points="78.6,140.1 105.65,121.4 132.7,116 159.75,127.9 186.8,59.5 213.85,138.8 240.9,139.8 267.95,110.9 295,136.7 322.05,67 349.1,53.9 376.15,40.4" fill="none" stroke="#70ad47" stroke-width="2" stroke-linejoin="round" stroke-linecap="round"/><text x="74.6" y="165.6" font-size="10.4" fill="#606060" font-family="Liberation Sans, sans-serif" text-anchor="end" transform="rotate(-45 74.6 162.6)">Jan</text><text x="101.65" y="165.6" font-size="10.4" fill="#606060" font-family="Liberation Sans, sans-serif" text-anchor="end" transform="rotate(-45 101.65 162.6)">Feb</text><text x="128.7" y="165.6" font-size="10.4" fill="#606060" font-family="Liberation Sans, sans-serif" text-anchor="end" transform="rotate(-45 128.7 162.6)">Mar</text><text x="155.75" y="165.6" font-size="10.4" fill="#606060" font-family="Liberation Sans, sans-serif" text-anchor="end" transform="rotate(-45 155.75 162.6)">Apr</text><text x="182.8" y="165.6" font-size="10.4" fill="#606060" font-family="Liberation Sans, sans-serif" text-anchor="end" transform="rotate(-45 182.8 162.6)">May</text><text x="209.85" y="165.6" font-size="10.4" fill="#606060" font-family="Liberation Sans, sans-serif" text-anchor="end" transform="rotate(-45 209.85 162.6)">Jun</text><text x="236.9" y="165.6" font-size="10.4" fill="#606060" font-family="Liberation Sans, sans-serif" text-anchor="end" transform="rotate(-45 236.9 162.6)">Jul</text><text x="263.95" y="165.6" font-size="10.4" fill="#606060" font-family="Liberation Sans, sans-serif" text-anchor="end" transform="rotate(-45 263.95 162.6)">Aug</text><text x="291" y="165.6" font-size="10.4" fill="#606060" font-family="Liberation Sans, sans-serif" text-anchor="end" transform="rotate(-45 291 162.6)">Sep</text><text x="318.05" y="165.6" font-size="10.4" fill="#606060" font-family="Liberation Sans, sans-serif" text-anchor="end" transform="rotate(-45 318.05 162.6)">Oct</text><text x="345.1" y="165.6" font-size="10.4" fill="#606060" font-family="Liberation Sans, sans-serif" text-anchor="end" transform="rotate(-45 345.1 162.6)">Nov</text><text x="372.15" y="165.6" font-size="10.4" fill="#606060" font-family="Liberation Sans, sans-serif" text-anchor="end" transform="rotate(-45 372.15 162.6)">Dec</text><rect x="68.7" y="186.9" width="28.5" height="7" fill="#4472c4"/><text x="99.2" y="194.6" font-size="11.2" fill="#606060" font-family="Liberation Sans, sans-serif" textLength="44" lengthAdjust="spacingAndGlyphs">2016 Act</text><rect x="161.4" y="186.9" width="28.5" height="7" fill="#ed7d31"/><text x="191.9" y="194.6" font-size="11.2" fill="#606060" font-family="Liberation Sans, sans-serif" textLength="44" lengthAdjust="spacingAndGlyphs">2017 Act</text><rect x="254.7" y="189.7" width="28.5" height="1.6" fill="#70ad47"/><text x="285.2" y="194.6" font-size="11.2" fill="#606060" font-family="Liberation Sans, sans-serif" textLength="47.5" lengthAdjust="spacingAndGlyphs">2017 Bud</text></svg>
</div>
<div class="a" style="left:69px;top:4px;width:1758px;height:42px;background:#fff;box-shadow:0 1px 5px rgba(0,0,0,.30);z-index:3;"></div>
<div class="a" style="left:0;top:0;width:1831px;height:50px;z-index:4">
<svg class="a" style="left:0px;top:0px;" width="1831" height="50" viewBox="0 0 1831 50"><rect x="83.2" y="16.75" width="11" height="1.7" fill="#1a1a1a"/><rect x="83.2" y="21.25" width="11" height="1.7" fill="#1a1a1a"/><rect x="83.2" y="25.75" width="11" height="1.7" fill="#1a1a1a"/><path d="M1304.4 12.8 a1.7 1.7 0 0 1 1.7 1.7 v0.5 c2.8 0.8 4 3.2 4 6.2 c0 3.2 0.8 5 2 6.2 v0.8 h-15.4 v-0.8 c1.2 -1.2 2 -3 2 -6.2 c0 -3 1.2 -5.4 4 -6.2 v-0.5 a1.7 1.7 0 0 1 1.7 -1.7 Z M1302.4 28.9 h4 a2 2 0 0 1 -4 0 Z" fill="#111"/><path d="M1406.8 22.6 l4.4 4.4 l4.4 -4.4" fill="none" stroke="#b4b4b4" stroke-width="1.6"/><circle cx="1450" cy="21.3" r="8.2" fill="none" stroke="#111" stroke-width="1.7"/><circle cx="1447" cy="18.8" r="1.3" fill="#111"/><circle cx="1453" cy="18.8" r="1.3" fill="#111"/><path d="M1445.4 23 a4.8 4.6 0 0 0 9.2 0" fill="none" stroke="#111" stroke-width="1.5"/><circle cx="1559.6" cy="21.3" r="8.2" fill="none" stroke="#111" stroke-width="1.7"/><text x="1559.6" y="26" font-size="13.5" font-weight="bold" font-family="Liberation Sans, sans-serif" text-anchor="middle" fill="#111">?</text><rect x="1626.6" y="12" width="1" height="22" fill="#b0b0b0"/><circle cx="1660.4" cy="17.9" r="5.1" fill="#111"/><path d="M1654.2 30.4 v-2.6 a6.2 4.2 0 0 1 12.4 0 v2.6 Z" fill="#111"/><path d="M1814 21.2 l4.5 4.5 l4.5 -4.5" fill="none" stroke="#b4b4b4" stroke-width="1.6"/></svg>
<div class="t" style="left:122.3px;top:13px;font-size:18.4px;line-height:21px;color:#858585;letter-spacing:0.16px;">Live Reporting</div>
<div class="t" style="left:256.5px;top:15px;font-size:17px;line-height:19px;color:#2a7bd1;letter-spacing:0.07px;">&gt;</div>
<div class="t" style="left:280px;top:13px;font-size:18.4px;line-height:21px;color:#858585;letter-spacing:0.06px;">NAV06 - Finance - P&amp;L Act YTD, Budget Rest of Year</div>
<div class="t" style="left:1320px;top:15px;font-size:14.6px;line-height:16px;color:#8a8a8a;letter-spacing:0.04px;">Notifications</div>
<div class="t" style="left:1465px;top:15px;font-size:14.6px;line-height:16px;color:#8a8a8a;transform:scaleX(0.9545);transform-origin:0 50%;">Feedback</div>
<div class="t" style="left:1575px;top:15px;font-size:14.6px;line-height:16px;color:#8a8a8a;transform:scaleX(0.9325);transform-origin:0 50%;">Help</div>
<div class="t" style="left:1671.4px;top:7px;font-size:16.8px;line-height:19px;color:#7a7a7a;letter-spacing:-0.06px;">Nils Rasmussen</div>
<div class="t" style="left:1671.4px;top:26px;font-size:13.4px;line-height:15px;color:#b9b9b9;transform:scaleX(0.7858);transform-origin:0 50%;">21_H<span style="font-size:10.3px">YBRID</span>_ERP_R<span style="font-size:10.3px">EPORTING</span></div>
</div>
<div class="a" style="left:4px;top:4px;width:65px;height:1021px;background:#2f3944;"></div>
<div class="a" style="left:4px;top:246.9px;width:65px;height:60.4px;background:#3c4857;"></div>
<div class="a" style="left:4px;top:122px;width:65px;height:1px;background:#2b343e;"></div>
<div class="a" style="left:4px;top:183.5px;width:65px;height:1px;background:#2b343e;"></div>
<div class="a" style="left:4px;top:246.4px;width:65px;height:1px;background:#2b343e;"></div>
<div class="a" style="left:4px;top:306.8px;width:65px;height:1px;background:#2b343e;"></div>
<div class="a" style="left:4px;top:369.3px;width:65px;height:1px;background:#2b343e;"></div>
<div class="a" style="left:4px;top:430.8px;width:65px;height:1px;background:#2b343e;"></div>
<div class="a" style="left:4px;top:492.3px;width:65px;height:1px;background:#2b343e;"></div>
<div class="a" style="left:4px;top:553.8px;width:65px;height:1px;background:#2b343e;"></div>
<div class="a" style="left:4px;top:615.3px;width:65px;height:1px;background:#2b343e;"></div>
<div class="a" style="left:4px;top:676.8px;width:65px;height:1px;background:#2b343e;"></div>
<svg class="a" style="left:0px;top:0px;" width="70" height="700" viewBox="0 0 70 700"><path d="M15.5 33.6 C24 28.5 34 24.5 42.3 21.3 L35.2 36.2 C29 33.2 22 32.8 15.5 33.6 Z" fill="#1c75bc"/><path d="M42.3 21.3 L55 36.3 C49 34.2 41.5 34.2 35.6 36.3 Z" fill="#8dc63f"/><path d="M24.8 95.4 L35 85 L45.6 95.4 V105.3 H24.8 Z" fill="#ffffff"/><rect x="27" y="95" width="5.6" height="3.4" fill="#2f3944"/><rect x="35.6" y="95" width="5.6" height="10.4" fill="#2f3944"/><path d="M21.6 93.3 L35 80.2 L48.4 93.3" fill="none" stroke="#4a8ad4" stroke-width="3.2" stroke-linejoin="miter"/><rect x="20.8" y="141.5" width="7.7" height="26" rx="0.8" fill="#ffffff"/><rect x="22.4" y="144.2" width="4.5" height="10" fill="#34465c"/><rect x="22.4" y="144.2" width="4.5" height="2.4" fill="#4a8ad4"/><circle cx="24.65" cy="162" r="1.6" fill="#2f3944"/><rect x="28.9" y="141.5" width="7.7" height="26" rx="0.8" fill="#ffffff"/><rect x="30.5" y="144.2" width="4.5" height="10" fill="#34465c"/><rect x="30.5" y="144.2" width="4.5" height="2.4" fill="#4a8ad4"/><circle cx="32.75" cy="162" r="1.6" fill="#2f3944"/><g transform="rotate(-13 43 154.5)"><rect x="39.6" y="141.5" width="7.7" height="26" rx="0.8" fill="#ffffff"/><rect x="41.2" y="144.2" width="4.5" height="10" fill="#34465c"/><rect x="41.2" y="144.2" width="4.5" height="2.4" fill="#4a8ad4"/><circle cx="43.45" cy="162" r="1.6" fill="#2f3944"/></g><rect x="25.8" y="205" width="18.8" height="23" rx="1.5" fill="none" stroke="#ffffff" stroke-width="2"/><path d="M29 207.5 v-2.8 a2 2 0 0 1 2-2 h1.6 a2.6 2.6 0 0 1 5.2 0 h1.6 a2 2 0 0 1 2 2 v2.8 Z" fill="#ffffff"/><rect x="31.2" y="204.3" width="8" height="1.2" fill="#aab2bb"/><path d="M30.6 214.5 l3 3 l6.2 -6.3 M30.6 221.7 l3 3 l6.2 -6.3" fill="none" stroke="#4a8ad4" stroke-width="2.2"/><rect x="23.9" y="262.3" width="22.6" height="27.7" fill="none" stroke="#ffffff" stroke-width="1.8"/><rect x="27.2" y="265.3" width="16" height="3.6" fill="#ffffff"/><path d="M29.8 273.3 L40.4 279.5 L29.8 285.7 Z" fill="#4a8ad4"/><rect x="24.8" y="323.6" width="20.6" height="29.1" rx="2" fill="#ffffff"/><rect x="27.3" y="326.4" width="15.6" height="4.6" rx="0.8" fill="#4a8ad4"/><circle cx="29.8" cy="337" r="1.65" fill="#2f3944"/><circle cx="29.8" cy="342.2" r="1.65" fill="#2f3944"/><circle cx="29.8" cy="347.4" r="1.65" fill="#2f3944"/><circle cx="35.1" cy="337" r="1.65" fill="#2f3944"/><circle cx="35.1" cy="342.2" r="1.65" fill="#2f3944"/><circle cx="35.1" cy="347.4" r="1.65" fill="#2f3944"/><circle cx="40.5" cy="337" r="1.65" fill="#2f3944"/><circle cx="40.5" cy="342.2" r="1.65" fill="#2f3944"/><circle cx="40.5" cy="347.4" r="1.65" fill="#2f3944"/><circle cx="35.2" cy="399.5" r="11.4" fill="none" stroke="#3f78b5" stroke-width="2.1"/><rect x="19.6" y="391.6" width="13.6" height="16.4" fill="#2f3944"/><path d="M21.5 393.5 h6.2 l3.6 3.6 v9.1 h-9.8 Z" fill="#2f3944" stroke="#ffffff" stroke-width="1.4"/><path d="M27.7 393.5 v3.6 h3.6" fill="none" stroke="#ffffff" stroke-width="1"/><rect x="38" y="391.6" width="12.6" height="16.4" fill="#2f3944"/><circle cx="44.3" cy="396.4" r="3.7" fill="#ffffff"/><path d="M39.1 406.8 v-2 a5.2 4 0 0 1 10.4 0 v2 Z" fill="#ffffff"/><rect x="30.3" y="447.9" width="9.6" height="7.4" rx="1.8" fill="none" stroke="#ffffff" stroke-width="2.4"/><rect x="32.5" y="450.3" width="5.2" height="2.6" fill="#222a33"/><rect x="30.3" y="458.4" width="9.6" height="7.4" rx="1.8" fill="none" stroke="#ffffff" stroke-width="2.4"/><rect x="32.5" y="460.8" width="5.2" height="2.6" fill="#222a33"/><rect x="30.3" y="468.9" width="9.6" height="7.4" rx="1.8" fill="none" stroke="#ffffff" stroke-width="2.4"/><rect x="32.5" y="471.3" width="5.2" height="2.6" fill="#222a33"/><path d="M27.2 454 a3.2 3.2 0 1 0 0 5.6 M27.6 452.4 v2.4 h-2.4" fill="none" stroke="#3f78b5" stroke-width="1.3"/><path d="M43 465 a3.2 3.2 0 1 1 0 5.6 M42.6 468.6 v2.4 h2.4" fill="none" stroke="#3f78b5" stroke-width="1.3"/><path d="M25 534.6 L30.4 529.4" fill="none" stroke="#4a8ad4" stroke-width="5.4" stroke-linecap="round"/><path d="M27 518.5 L42.3 532.3" fill="none" stroke="#ffffff" stroke-width="6.6" stroke-linecap="round"/><circle cx="42.6" cy="532.6" r="1.5" fill="#2f3944"/><path d="M19.6 515.2 a7.6 7.6 0 0 0 13.4 3 a7.6 7.6 0 0 0 -5 -8.6 l0.8 4.8 l-3.6 2.8 Z" fill="#ffffff"/><path d="M35.8 514 l3.6 -3 l4.6 0.8 l6.6 6.8 l-4 4.2 l-3 -3 l-3.4 3.8 l-3 -2.800 l3.600 -3.800 Z" fill="#ffffff"/><path d="M27 581 a5.2 5.2 0 0 1 7.6 -6.2 a5.8 5.8 0 0 1 10.4 2.4 a4.9 4.9 0 0 1 -0.800 9.700 h-6.8" fill="none" stroke="#3f78b5" stroke-width="1.4"/><rect x="20.8" y="581" width="16.7" height="5.7" rx="1.4" fill="#ffffff"/><rect x="23" y="583.1" width="5.6" height="1.5" fill="#2f3944"/><rect x="20.8" y="587.5" width="16.7" height="5.7" rx="1.4" fill="#ffffff"/><rect x="23" y="589.6" width="5.6" height="1.5" fill="#2f3944"/><rect x="20.8" y="594" width="16.7" height="5.7" rx="1.4" fill="#ffffff"/><rect x="23" y="596.1" width="5.6" height="1.5" fill="#2f3944"/><path d="M48.2 644.7 L48.2 649.3 L45.02 649.4 L43.78 652.38 L45.96 654.71 L42.71 657.96 L40.38 655.78 L37.4 657.02 L37.3 660.2 L32.7 660.2 L32.6 657.02 L29.62 655.78 L27.29 657.96 L24.04 654.71 L26.22 652.38 L24.98 649.4 L21.8 649.3 L21.8 644.7 L24.98 644.6 L26.22 641.62 L24.04 639.29 L27.29 636.04 L29.62 638.22 L32.6 636.98 L32.7 633.8 L37.3 633.8 L37.4 636.98 L40.38 638.22 L42.71 636.04 L45.96 639.29 L43.78 641.62 L45.02 644.6 Z M29.1 647 a5.9 5.9 0 1 0 11.8 0 a5.9 5.9 0 1 0 -11.8 0 Z" fill="#ffffff" fill-rule="evenodd" stroke="#ffffff" stroke-width="1.6" stroke-linejoin="round"/></svg>
</div>
<div id="bezel"></div>
</body></html>
